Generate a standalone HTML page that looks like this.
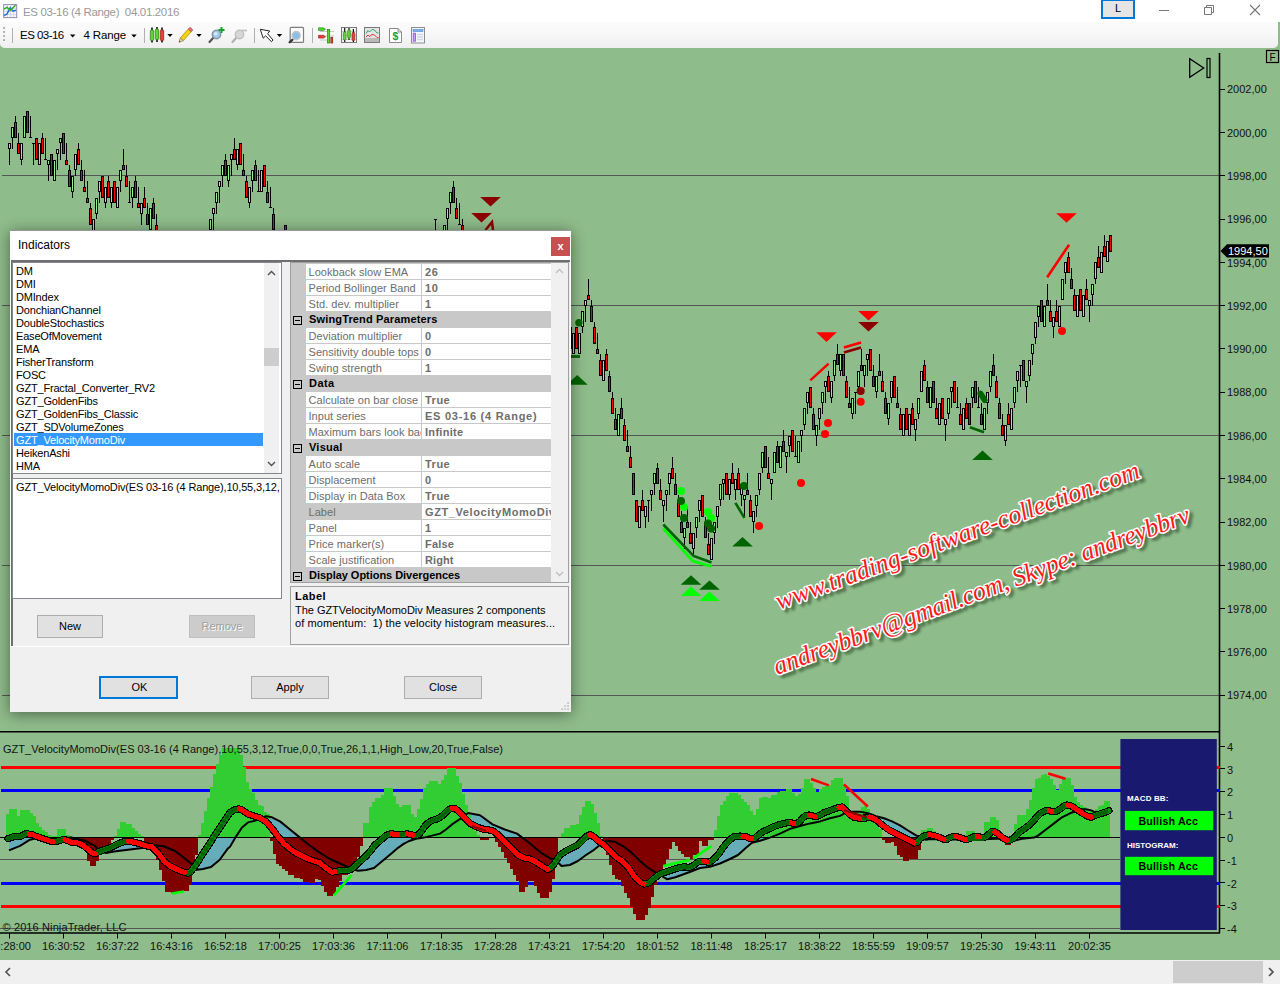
<!DOCTYPE html>
<html><head><meta charset="utf-8"><title>ES 03-16 (4 Range) 04.01.2016</title>
<style>
html,body{margin:0;padding:0}
body{width:1280px;height:984px;overflow:hidden;position:relative;background:#8FBC8B;font-family:"Liberation Sans",sans-serif;font-size:11px;color:#000}
.abs{position:absolute}
#titlebar{left:0;top:0;width:1280px;height:22px;background:#fff}
#titletext{left:23px;top:6px;font-size:11.5px;color:#999;white-space:pre;letter-spacing:-0.34px}
#toolbar{left:0;top:22px;width:1278px;height:26px;border-radius:0 0 5px 5px/0 0 4px 4px;background:linear-gradient(#fbfbfb 0%,#f8f8f8 45%,#efefef 100%)}
  .tbt{font-size:11.5px;top:29px;color:#000;white-space:pre}
svg{position:absolute;left:0;top:0}
#dlg{left:10px;top:230px;width:561px;height:482px;background:#fff;box-shadow:0 2px 14px rgba(0,0,0,.47)}
#dlgtitle{left:8px;top:8px;font-size:12px;color:#000}
#dlgclose{left:541px;top:7px;width:19px;height:19px;background:#C75050;color:#fff;font-weight:bold;font-size:11px;text-align:center;line-height:18px}
#dlgbody{left:1px;top:30px;width:558.5px;height:386px;background:#f0f0f0;border-top:2px solid #6e6e6e;border-left:2px solid #6e6e6e;box-sizing:border-box}
.lb{background:#fff;border:1px solid #828790;box-sizing:border-box;overflow:hidden}
.li{position:absolute;left:3px;height:13px;line-height:13px;white-space:pre;font-size:11px;letter-spacing:-0.18px}
.btn{position:absolute;box-sizing:border-box;background:#e1e1e1;border:1px solid #adadad;text-align:center;font-size:11px;line-height:20px;height:23px}
.pgrow{position:absolute;left:0;height:16px;width:260px}
.pgl{position:absolute;left:15px;top:0;width:115px;height:15px;background:#fff;border-bottom:1px solid #c8c8c8;color:#6d6d6d;line-height:16px;white-space:pre;overflow:hidden;text-indent:2.5px;letter-spacing:0.04px}
.pgv{position:absolute;left:131px;top:0;width:129px;height:15px;background:#fff;border-bottom:1px solid #c8c8c8;color:#6d6d6d;font-weight:bold;line-height:16px;white-space:pre;overflow:hidden;text-indent:3px;letter-spacing:-0.35px}
.pgc{position:absolute;left:18px;top:0;height:16px;line-height:15px;font-weight:bold;color:#000;white-space:pre;letter-spacing:-0.3px}
.pgx{position:absolute;left:2px;top:4px;width:7px;height:7px;border:1px solid #000}
.pgx:after{content:"";position:absolute;left:1px;top:3px;width:5px;height:1px;background:#000}
</style></head><body>
<svg width="1280" height="984" viewBox="0 0 1280 984" font-family="'Liberation Sans',sans-serif" font-size="11">
<line x1="2" y1="175.5" x2="1219" y2="175.5" stroke="#555" stroke-width="1"/>
<line x1="2" y1="305.5" x2="1219" y2="305.5" stroke="#555" stroke-width="1"/>
<line x1="2" y1="435.5" x2="1219" y2="435.5" stroke="#555" stroke-width="1"/>
<line x1="2" y1="565.5" x2="1219" y2="565.5" stroke="#555" stroke-width="1"/>
<line x1="2" y1="695.5" x2="1219" y2="695.5" stroke="#555" stroke-width="1"/>
<g shape-rendering="crispEdges"><path d="M9.5 143.0V165.0" stroke="#000" stroke-width="1"/><rect x="8.5" y="143.5" width="2" height="5.0" fill="#90EE90" stroke="#000" stroke-width="1"/><path d="M12.5 127.0V149.0" stroke="#000" stroke-width="1"/><rect x="11.5" y="127.5" width="2" height="10.0" fill="#90EE90" stroke="#000" stroke-width="1"/><path d="M15.5 116.0V138.0" stroke="#000" stroke-width="1"/><rect x="14.5" y="122.5" width="2" height="15.0" fill="#FF0000" stroke="#000" stroke-width="1"/><path d="M18.5 133.0V154.0" stroke="#000" stroke-width="1"/><rect x="17.5" y="143.5" width="2" height="10.0" fill="#FF0000" stroke="#000" stroke-width="1"/><path d="M21.5 143.0V165.0" stroke="#000" stroke-width="1"/><rect x="20.5" y="143.5" width="2" height="16.0" fill="#90EE90" stroke="#000" stroke-width="1"/><path d="M24.5 116.0V138.0" stroke="#000" stroke-width="1"/><rect x="23.5" y="116.5" width="2" height="21.0" fill="#90EE90" stroke="#000" stroke-width="1"/><path d="M27.5 111.0V133.0" stroke="#000" stroke-width="1"/><rect x="26.5" y="111.5" width="2" height="21.0" fill="#FF0000" stroke="#000" stroke-width="1"/><path d="M30.5 116.0V138.0" stroke="#000" stroke-width="1"/><path d="M29.0 137.5H32.0" stroke="#000" stroke-width="1"/><path d="M33.5 143.0V165.0" stroke="#000" stroke-width="1"/><path d="M32.0 143.5H35.0" stroke="#000" stroke-width="1"/><path d="M36.5 138.0V160.0" stroke="#000" stroke-width="1"/><rect x="35.5" y="138.5" width="2" height="21.0" fill="#FF0000" stroke="#000" stroke-width="1"/><path d="M39.5 143.0V165.0" stroke="#000" stroke-width="1"/><rect x="38.5" y="143.5" width="2" height="21.0" fill="#90EE90" stroke="#000" stroke-width="1"/><path d="M42.5 133.0V154.0" stroke="#000" stroke-width="1"/><rect x="41.5" y="138.5" width="2" height="15.0" fill="#FF0000" stroke="#000" stroke-width="1"/><path d="M45.5 138.0V160.0" stroke="#000" stroke-width="1"/><path d="M44.0 159.5H47.0" stroke="#000" stroke-width="1"/><path d="M48.5 160.0V181.0" stroke="#000" stroke-width="1"/><rect x="47.5" y="160.5" width="2" height="4.0" fill="#90EE90" stroke="#000" stroke-width="1"/><path d="M51.5 154.0V176.0" stroke="#000" stroke-width="1"/><rect x="50.5" y="154.5" width="2" height="21.0" fill="#FF0000" stroke="#000" stroke-width="1"/><path d="M54.5 160.0V181.0" stroke="#000" stroke-width="1"/><rect x="53.5" y="160.5" width="2" height="20.0" fill="#90EE90" stroke="#000" stroke-width="1"/><path d="M57.5 149.0V170.0" stroke="#000" stroke-width="1"/><rect x="56.5" y="149.5" width="2" height="4.0" fill="#90EE90" stroke="#000" stroke-width="1"/><path d="M60.5 138.0V160.0" stroke="#000" stroke-width="1"/><rect x="59.5" y="138.5" width="2" height="4.0" fill="#90EE90" stroke="#000" stroke-width="1"/><path d="M63.5 133.0V154.0" stroke="#000" stroke-width="1"/><rect x="62.5" y="133.5" width="2" height="20.0" fill="#FF0000" stroke="#000" stroke-width="1"/><path d="M66.5 143.0V165.0" stroke="#000" stroke-width="1"/><rect x="65.5" y="160.5" width="2" height="4.0" fill="#FF0000" stroke="#000" stroke-width="1"/><path d="M69.5 165.0V187.0" stroke="#000" stroke-width="1"/><rect x="68.5" y="170.5" width="2" height="16.0" fill="#FF0000" stroke="#000" stroke-width="1"/><path d="M72.5 176.0V198.0" stroke="#000" stroke-width="1"/><rect x="71.5" y="176.5" width="2" height="15.0" fill="#90EE90" stroke="#000" stroke-width="1"/><path d="M75.5 154.0V176.0" stroke="#000" stroke-width="1"/><rect x="74.5" y="154.5" width="2" height="15.0" fill="#90EE90" stroke="#000" stroke-width="1"/><path d="M78.5 143.0V165.0" stroke="#000" stroke-width="1"/><rect x="77.5" y="149.5" width="2" height="15.0" fill="#FF0000" stroke="#000" stroke-width="1"/><path d="M81.5 160.0V181.0" stroke="#000" stroke-width="1"/><rect x="80.5" y="170.5" width="2" height="10.0" fill="#FF0000" stroke="#000" stroke-width="1"/><path d="M84.5 170.0V192.0" stroke="#000" stroke-width="1"/><rect x="83.5" y="187.5" width="2" height="4.0" fill="#FF0000" stroke="#000" stroke-width="1"/><path d="M87.5 181.0V203.0" stroke="#000" stroke-width="1"/><rect x="86.5" y="198.5" width="2" height="4.0" fill="#FF0000" stroke="#000" stroke-width="1"/><path d="M90.5 203.0V225.0" stroke="#000" stroke-width="1"/><rect x="89.5" y="208.5" width="2" height="16.0" fill="#FF0000" stroke="#000" stroke-width="1"/><path d="M93.5 219.0V241.0" stroke="#000" stroke-width="1"/><rect x="92.5" y="219.5" width="2" height="15.0" fill="#90EE90" stroke="#000" stroke-width="1"/><path d="M96.5 198.0V219.0" stroke="#000" stroke-width="1"/><rect x="95.5" y="198.5" width="2" height="15.0" fill="#90EE90" stroke="#000" stroke-width="1"/><path d="M99.5 181.0V203.0" stroke="#000" stroke-width="1"/><rect x="98.5" y="181.5" width="2" height="10.0" fill="#90EE90" stroke="#000" stroke-width="1"/><path d="M102.5 176.0V198.0" stroke="#000" stroke-width="1"/><rect x="101.5" y="176.5" width="2" height="21.0" fill="#FF0000" stroke="#000" stroke-width="1"/><path d="M105.5 187.0V208.0" stroke="#000" stroke-width="1"/><rect x="104.5" y="187.5" width="2" height="15.0" fill="#90EE90" stroke="#000" stroke-width="1"/><path d="M108.5 176.0V198.0" stroke="#000" stroke-width="1"/><rect x="107.5" y="181.5" width="2" height="16.0" fill="#FF0000" stroke="#000" stroke-width="1"/><path d="M111.5 187.0V208.0" stroke="#000" stroke-width="1"/><rect x="110.5" y="187.5" width="2" height="15.0" fill="#90EE90" stroke="#000" stroke-width="1"/><path d="M114.5 181.0V203.0" stroke="#000" stroke-width="1"/><rect x="113.5" y="181.5" width="2" height="21.0" fill="#FF0000" stroke="#000" stroke-width="1"/><path d="M117.5 187.0V208.0" stroke="#000" stroke-width="1"/><rect x="116.5" y="187.5" width="2" height="20.0" fill="#90EE90" stroke="#000" stroke-width="1"/><path d="M120.5 170.0V192.0" stroke="#000" stroke-width="1"/><rect x="119.5" y="170.5" width="2" height="10.0" fill="#90EE90" stroke="#000" stroke-width="1"/><path d="M123.5 149.0V170.0" stroke="#000" stroke-width="1"/><rect x="122.5" y="165.5" width="2" height="4.0" fill="#FF0000" stroke="#000" stroke-width="1"/><path d="M126.5 165.0V187.0" stroke="#000" stroke-width="1"/><rect x="125.5" y="176.5" width="2" height="10.0" fill="#FF0000" stroke="#000" stroke-width="1"/><path d="M129.5 181.0V203.0" stroke="#000" stroke-width="1"/><path d="M128.0 202.5H131.0" stroke="#000" stroke-width="1"/><path d="M132.5 187.0V208.0" stroke="#000" stroke-width="1"/><rect x="131.5" y="187.5" width="2" height="10.0" fill="#90EE90" stroke="#000" stroke-width="1"/><path d="M135.5 176.0V198.0" stroke="#000" stroke-width="1"/><rect x="134.5" y="181.5" width="2" height="16.0" fill="#FF0000" stroke="#000" stroke-width="1"/><path d="M138.5 187.0V208.0" stroke="#000" stroke-width="1"/><rect x="137.5" y="203.5" width="2" height="4.0" fill="#FF0000" stroke="#000" stroke-width="1"/><path d="M141.5 203.0V225.0" stroke="#000" stroke-width="1"/><rect x="140.5" y="203.5" width="2" height="10.0" fill="#90EE90" stroke="#000" stroke-width="1"/><path d="M144.5 187.0V208.0" stroke="#000" stroke-width="1"/><rect x="143.5" y="198.5" width="2" height="9.0" fill="#FF0000" stroke="#000" stroke-width="1"/><path d="M147.5 203.0V225.0" stroke="#000" stroke-width="1"/><rect x="146.5" y="214.5" width="2" height="10.0" fill="#FF0000" stroke="#000" stroke-width="1"/><path d="M150.5 208.0V230.0" stroke="#000" stroke-width="1"/><rect x="149.5" y="208.5" width="2" height="21.0" fill="#90EE90" stroke="#000" stroke-width="1"/><path d="M153.5 198.0V219.0" stroke="#000" stroke-width="1"/><rect x="152.5" y="203.5" width="2" height="15.0" fill="#FF0000" stroke="#000" stroke-width="1"/><path d="M156.5 214.0V235.0" stroke="#000" stroke-width="1"/><rect x="155.5" y="225.5" width="2" height="9.0" fill="#FF0000" stroke="#000" stroke-width="1"/><path d="M210.5 219.0V241.0" stroke="#000" stroke-width="1"/><rect x="209.5" y="219.5" width="2" height="10.0" fill="#90EE90" stroke="#000" stroke-width="1"/><path d="M213.5 208.0V230.0" stroke="#000" stroke-width="1"/><rect x="212.5" y="208.5" width="2" height="5.0" fill="#90EE90" stroke="#000" stroke-width="1"/><path d="M216.5 192.0V214.0" stroke="#000" stroke-width="1"/><rect x="215.5" y="192.5" width="2" height="10.0" fill="#90EE90" stroke="#000" stroke-width="1"/><path d="M219.5 181.0V203.0" stroke="#000" stroke-width="1"/><rect x="218.5" y="181.5" width="2" height="5.0" fill="#90EE90" stroke="#000" stroke-width="1"/><path d="M222.5 165.0V187.0" stroke="#000" stroke-width="1"/><rect x="221.5" y="165.5" width="2" height="10.0" fill="#90EE90" stroke="#000" stroke-width="1"/><path d="M225.5 154.0V176.0" stroke="#000" stroke-width="1"/><rect x="224.5" y="160.5" width="2" height="15.0" fill="#FF0000" stroke="#000" stroke-width="1"/><path d="M228.5 165.0V187.0" stroke="#000" stroke-width="1"/><rect x="227.5" y="165.5" width="2" height="15.0" fill="#90EE90" stroke="#000" stroke-width="1"/><path d="M231.5 154.0V176.0" stroke="#000" stroke-width="1"/><rect x="230.5" y="154.5" width="2" height="5.0" fill="#90EE90" stroke="#000" stroke-width="1"/><path d="M234.5 138.0V160.0" stroke="#000" stroke-width="1"/><rect x="233.5" y="149.5" width="2" height="10.0" fill="#FF0000" stroke="#000" stroke-width="1"/><path d="M237.5 149.0V170.0" stroke="#000" stroke-width="1"/><rect x="236.5" y="149.5" width="2" height="15.0" fill="#90EE90" stroke="#000" stroke-width="1"/><path d="M240.5 143.0V165.0" stroke="#000" stroke-width="1"/><rect x="239.5" y="143.5" width="2" height="21.0" fill="#FF0000" stroke="#000" stroke-width="1"/><path d="M243.5 154.0V176.0" stroke="#000" stroke-width="1"/><rect x="242.5" y="170.5" width="2" height="5.0" fill="#FF0000" stroke="#000" stroke-width="1"/><path d="M246.5 176.0V198.0" stroke="#000" stroke-width="1"/><rect x="245.5" y="181.5" width="2" height="16.0" fill="#FF0000" stroke="#000" stroke-width="1"/><path d="M249.5 187.0V208.0" stroke="#000" stroke-width="1"/><rect x="248.5" y="187.5" width="2" height="15.0" fill="#90EE90" stroke="#000" stroke-width="1"/><path d="M252.5 170.0V192.0" stroke="#000" stroke-width="1"/><rect x="251.5" y="170.5" width="2" height="10.0" fill="#90EE90" stroke="#000" stroke-width="1"/><path d="M255.5 160.0V181.0" stroke="#000" stroke-width="1"/><rect x="254.5" y="165.5" width="2" height="15.0" fill="#FF0000" stroke="#000" stroke-width="1"/><path d="M258.5 170.0V192.0" stroke="#000" stroke-width="1"/><path d="M257.0 191.5H260.0" stroke="#000" stroke-width="1"/><path d="M261.5 170.0V192.0" stroke="#000" stroke-width="1"/><rect x="260.5" y="170.5" width="2" height="21.0" fill="#90EE90" stroke="#000" stroke-width="1"/><path d="M264.5 165.0V187.0" stroke="#000" stroke-width="1"/><rect x="263.5" y="165.5" width="2" height="21.0" fill="#FF0000" stroke="#000" stroke-width="1"/><path d="M267.5 181.0V203.0" stroke="#000" stroke-width="1"/><rect x="266.5" y="192.5" width="2" height="10.0" fill="#FF0000" stroke="#000" stroke-width="1"/><path d="M270.5 187.0V208.0" stroke="#000" stroke-width="1"/><path d="M269.0 207.5H272.0" stroke="#000" stroke-width="1"/><path d="M273.5 208.0V230.0" stroke="#000" stroke-width="1"/><rect x="272.5" y="214.5" width="2" height="15.0" fill="#FF0000" stroke="#000" stroke-width="1"/><path d="M285.5 225.0V246.0" stroke="#000" stroke-width="1"/><rect x="284.5" y="225.5" width="2" height="20.0" fill="#FF0000" stroke="#000" stroke-width="1"/><path d="M435.5 219.0V241.0" stroke="#000" stroke-width="1"/><path d="M434.0 219.5H437.0" stroke="#000" stroke-width="1"/><path d="M444.5 225.0V246.0" stroke="#000" stroke-width="1"/><rect x="443.5" y="225.5" width="2" height="9.0" fill="#90EE90" stroke="#000" stroke-width="1"/><path d="M447.5 208.0V230.0" stroke="#000" stroke-width="1"/><rect x="446.5" y="208.5" width="2" height="10.0" fill="#90EE90" stroke="#000" stroke-width="1"/><path d="M450.5 192.0V214.0" stroke="#000" stroke-width="1"/><rect x="449.5" y="192.5" width="2" height="10.0" fill="#90EE90" stroke="#000" stroke-width="1"/><path d="M453.5 181.0V203.0" stroke="#000" stroke-width="1"/><rect x="452.5" y="187.5" width="2" height="15.0" fill="#FF0000" stroke="#000" stroke-width="1"/><path d="M456.5 198.0V219.0" stroke="#000" stroke-width="1"/><rect x="455.5" y="208.5" width="2" height="10.0" fill="#FF0000" stroke="#000" stroke-width="1"/><path d="M459.5 203.0V225.0" stroke="#000" stroke-width="1"/><path d="M458.0 224.5H461.0" stroke="#000" stroke-width="1"/><path d="M462.5 219.0V241.0" stroke="#000" stroke-width="1"/><rect x="461.5" y="225.5" width="2" height="15.0" fill="#FF0000" stroke="#000" stroke-width="1"/><path d="M570.5 327.0V349.0" stroke="#000" stroke-width="1"/><rect x="569.5" y="327.5" width="2" height="21.0" fill="#FF0000" stroke="#000" stroke-width="1"/><path d="M573.5 333.0V354.0" stroke="#000" stroke-width="1"/><rect x="572.5" y="333.5" width="2" height="20.0" fill="#90EE90" stroke="#000" stroke-width="1"/><path d="M576.5 327.0V349.0" stroke="#000" stroke-width="1"/><rect x="575.5" y="327.5" width="2" height="21.0" fill="#FF0000" stroke="#000" stroke-width="1"/><path d="M579.5 333.0V354.0" stroke="#000" stroke-width="1"/><rect x="578.5" y="333.5" width="2" height="20.0" fill="#90EE90" stroke="#000" stroke-width="1"/><path d="M582.5 311.0V333.0" stroke="#000" stroke-width="1"/><rect x="581.5" y="311.5" width="2" height="15.0" fill="#90EE90" stroke="#000" stroke-width="1"/><path d="M585.5 300.0V322.0" stroke="#000" stroke-width="1"/><rect x="584.5" y="300.5" width="2" height="5.0" fill="#90EE90" stroke="#000" stroke-width="1"/><path d="M588.5 279.0V300.0" stroke="#000" stroke-width="1"/><rect x="587.5" y="295.5" width="2" height="4.0" fill="#FF0000" stroke="#000" stroke-width="1"/><path d="M591.5 300.0V322.0" stroke="#000" stroke-width="1"/><rect x="590.5" y="306.5" width="2" height="15.0" fill="#FF0000" stroke="#000" stroke-width="1"/><path d="M594.5 322.0V344.0" stroke="#000" stroke-width="1"/><rect x="593.5" y="327.5" width="2" height="16.0" fill="#FF0000" stroke="#000" stroke-width="1"/><path d="M597.5 333.0V354.0" stroke="#000" stroke-width="1"/><rect x="596.5" y="349.5" width="2" height="4.0" fill="#FF0000" stroke="#000" stroke-width="1"/><path d="M600.5 354.0V376.0" stroke="#000" stroke-width="1"/><rect x="599.5" y="360.5" width="2" height="15.0" fill="#FF0000" stroke="#000" stroke-width="1"/><path d="M603.5 360.0V381.0" stroke="#000" stroke-width="1"/><rect x="602.5" y="360.5" width="2" height="20.0" fill="#90EE90" stroke="#000" stroke-width="1"/><path d="M606.5 349.0V371.0" stroke="#000" stroke-width="1"/><rect x="605.5" y="354.5" width="2" height="16.0" fill="#FF0000" stroke="#000" stroke-width="1"/><path d="M609.5 371.0V392.0" stroke="#000" stroke-width="1"/><rect x="608.5" y="376.5" width="2" height="15.0" fill="#FF0000" stroke="#000" stroke-width="1"/><path d="M612.5 392.0V414.0" stroke="#000" stroke-width="1"/><rect x="611.5" y="398.5" width="2" height="15.0" fill="#FF0000" stroke="#000" stroke-width="1"/><path d="M615.5 408.0V430.0" stroke="#000" stroke-width="1"/><rect x="614.5" y="419.5" width="2" height="10.0" fill="#FF0000" stroke="#000" stroke-width="1"/><path d="M618.5 414.0V436.0" stroke="#000" stroke-width="1"/><rect x="617.5" y="414.5" width="2" height="21.0" fill="#90EE90" stroke="#000" stroke-width="1"/><path d="M621.5 398.0V419.0" stroke="#000" stroke-width="1"/><rect x="620.5" y="408.5" width="2" height="10.0" fill="#FF0000" stroke="#000" stroke-width="1"/><path d="M624.5 419.0V441.0" stroke="#000" stroke-width="1"/><rect x="623.5" y="425.5" width="2" height="15.0" fill="#FF0000" stroke="#000" stroke-width="1"/><path d="M627.5 430.0V452.0" stroke="#000" stroke-width="1"/><rect x="626.5" y="446.5" width="2" height="5.0" fill="#FF0000" stroke="#000" stroke-width="1"/><path d="M630.5 446.0V468.0" stroke="#000" stroke-width="1"/><rect x="629.5" y="457.5" width="2" height="10.0" fill="#FF0000" stroke="#000" stroke-width="1"/><path d="M633.5 473.0V495.0" stroke="#000" stroke-width="1"/><rect x="632.5" y="473.5" width="2" height="21.0" fill="#FF0000" stroke="#000" stroke-width="1"/><path d="M636.5 500.0V522.0" stroke="#000" stroke-width="1"/><rect x="635.5" y="500.5" width="2" height="21.0" fill="#FF0000" stroke="#000" stroke-width="1"/><path d="M639.5 506.0V528.0" stroke="#000" stroke-width="1"/><rect x="638.5" y="506.5" width="2" height="21.0" fill="#90EE90" stroke="#000" stroke-width="1"/><path d="M642.5 490.0V511.0" stroke="#000" stroke-width="1"/><rect x="641.5" y="500.5" width="2" height="10.0" fill="#FF0000" stroke="#000" stroke-width="1"/><path d="M645.5 506.0V528.0" stroke="#000" stroke-width="1"/><rect x="644.5" y="506.5" width="2" height="10.0" fill="#90EE90" stroke="#000" stroke-width="1"/><path d="M648.5 500.0V522.0" stroke="#000" stroke-width="1"/><path d="M647.0 500.5H650.0" stroke="#000" stroke-width="1"/><path d="M651.5 490.0V511.0" stroke="#000" stroke-width="1"/><rect x="650.5" y="490.5" width="2" height="4.0" fill="#90EE90" stroke="#000" stroke-width="1"/><path d="M654.5 473.0V495.0" stroke="#000" stroke-width="1"/><rect x="653.5" y="473.5" width="2" height="10.0" fill="#90EE90" stroke="#000" stroke-width="1"/><path d="M657.5 463.0V484.0" stroke="#000" stroke-width="1"/><rect x="656.5" y="468.5" width="2" height="15.0" fill="#FF0000" stroke="#000" stroke-width="1"/><path d="M660.5 479.0V500.0" stroke="#000" stroke-width="1"/><rect x="659.5" y="490.5" width="2" height="9.0" fill="#FF0000" stroke="#000" stroke-width="1"/><path d="M663.5 500.0V522.0" stroke="#000" stroke-width="1"/><rect x="662.5" y="500.5" width="2" height="5.0" fill="#90EE90" stroke="#000" stroke-width="1"/><path d="M666.5 490.0V511.0" stroke="#000" stroke-width="1"/><rect x="665.5" y="490.5" width="2" height="4.0" fill="#90EE90" stroke="#000" stroke-width="1"/><path d="M669.5 473.0V495.0" stroke="#000" stroke-width="1"/><rect x="668.5" y="473.5" width="2" height="10.0" fill="#90EE90" stroke="#000" stroke-width="1"/><path d="M672.5 457.0V479.0" stroke="#000" stroke-width="1"/><rect x="671.5" y="468.5" width="2" height="10.0" fill="#FF0000" stroke="#000" stroke-width="1"/><path d="M675.5 473.0V495.0" stroke="#000" stroke-width="1"/><rect x="674.5" y="484.5" width="2" height="10.0" fill="#FF0000" stroke="#000" stroke-width="1"/><path d="M678.5 495.0V517.0" stroke="#000" stroke-width="1"/><rect x="677.5" y="500.5" width="2" height="16.0" fill="#FF0000" stroke="#000" stroke-width="1"/><path d="M681.5 511.0V533.0" stroke="#000" stroke-width="1"/><rect x="680.5" y="522.5" width="2" height="10.0" fill="#FF0000" stroke="#000" stroke-width="1"/><path d="M684.5 528.0V549.0" stroke="#000" stroke-width="1"/><rect x="683.5" y="528.5" width="2" height="9.0" fill="#90EE90" stroke="#000" stroke-width="1"/><path d="M687.5 506.0V528.0" stroke="#000" stroke-width="1"/><rect x="686.5" y="522.5" width="2" height="5.0" fill="#FF0000" stroke="#000" stroke-width="1"/><path d="M690.5 522.0V544.0" stroke="#000" stroke-width="1"/><rect x="689.5" y="533.5" width="2" height="10.0" fill="#FF0000" stroke="#000" stroke-width="1"/><path d="M693.5 533.0V555.0" stroke="#000" stroke-width="1"/><rect x="692.5" y="533.5" width="2" height="15.0" fill="#90EE90" stroke="#000" stroke-width="1"/><path d="M696.5 517.0V538.0" stroke="#000" stroke-width="1"/><rect x="695.5" y="517.5" width="2" height="10.0" fill="#90EE90" stroke="#000" stroke-width="1"/><path d="M699.5 500.0V522.0" stroke="#000" stroke-width="1"/><rect x="698.5" y="500.5" width="2" height="10.0" fill="#90EE90" stroke="#000" stroke-width="1"/><path d="M702.5 495.0V517.0" stroke="#000" stroke-width="1"/><rect x="701.5" y="495.5" width="2" height="21.0" fill="#FF0000" stroke="#000" stroke-width="1"/><path d="M705.5 517.0V538.0" stroke="#000" stroke-width="1"/><rect x="704.5" y="522.5" width="2" height="15.0" fill="#FF0000" stroke="#000" stroke-width="1"/><path d="M708.5 533.0V555.0" stroke="#000" stroke-width="1"/><rect x="707.5" y="544.5" width="2" height="10.0" fill="#FF0000" stroke="#000" stroke-width="1"/><path d="M711.5 538.0V560.0" stroke="#000" stroke-width="1"/><rect x="710.5" y="538.5" width="2" height="21.0" fill="#90EE90" stroke="#000" stroke-width="1"/><path d="M714.5 522.0V544.0" stroke="#000" stroke-width="1"/><rect x="713.5" y="522.5" width="2" height="10.0" fill="#90EE90" stroke="#000" stroke-width="1"/><path d="M717.5 506.0V528.0" stroke="#000" stroke-width="1"/><rect x="716.5" y="506.5" width="2" height="10.0" fill="#90EE90" stroke="#000" stroke-width="1"/><path d="M720.5 484.0V506.0" stroke="#000" stroke-width="1"/><rect x="719.5" y="484.5" width="2" height="15.0" fill="#90EE90" stroke="#000" stroke-width="1"/><path d="M723.5 479.0V500.0" stroke="#000" stroke-width="1"/><rect x="722.5" y="479.5" width="2" height="4.0" fill="#90EE90" stroke="#000" stroke-width="1"/><path d="M726.5 473.0V495.0" stroke="#000" stroke-width="1"/><rect x="725.5" y="473.5" width="2" height="21.0" fill="#FF0000" stroke="#000" stroke-width="1"/><path d="M729.5 479.0V500.0" stroke="#000" stroke-width="1"/><rect x="728.5" y="479.5" width="2" height="15.0" fill="#90EE90" stroke="#000" stroke-width="1"/><path d="M732.5 463.0V484.0" stroke="#000" stroke-width="1"/><rect x="731.5" y="473.5" width="2" height="10.0" fill="#FF0000" stroke="#000" stroke-width="1"/><path d="M735.5 479.0V500.0" stroke="#000" stroke-width="1"/><rect x="734.5" y="479.5" width="2" height="10.0" fill="#90EE90" stroke="#000" stroke-width="1"/><path d="M738.5 468.0V490.0" stroke="#000" stroke-width="1"/><rect x="737.5" y="473.5" width="2" height="16.0" fill="#FF0000" stroke="#000" stroke-width="1"/><path d="M741.5 484.0V506.0" stroke="#000" stroke-width="1"/><rect x="740.5" y="484.5" width="2" height="10.0" fill="#90EE90" stroke="#000" stroke-width="1"/><path d="M744.5 495.0V517.0" stroke="#000" stroke-width="1"/><rect x="743.5" y="495.5" width="2" height="4.0" fill="#90EE90" stroke="#000" stroke-width="1"/><path d="M747.5 473.0V495.0" stroke="#000" stroke-width="1"/><rect x="746.5" y="490.5" width="2" height="4.0" fill="#FF0000" stroke="#000" stroke-width="1"/><path d="M750.5 495.0V517.0" stroke="#000" stroke-width="1"/><rect x="749.5" y="500.5" width="2" height="16.0" fill="#FF0000" stroke="#000" stroke-width="1"/><path d="M753.5 511.0V533.0" stroke="#000" stroke-width="1"/><rect x="752.5" y="511.5" width="2" height="10.0" fill="#90EE90" stroke="#000" stroke-width="1"/><path d="M756.5 495.0V517.0" stroke="#000" stroke-width="1"/><rect x="755.5" y="495.5" width="2" height="10.0" fill="#90EE90" stroke="#000" stroke-width="1"/><path d="M759.5 473.0V495.0" stroke="#000" stroke-width="1"/><rect x="758.5" y="473.5" width="2" height="16.0" fill="#90EE90" stroke="#000" stroke-width="1"/><path d="M762.5 452.0V473.0" stroke="#000" stroke-width="1"/><rect x="761.5" y="452.5" width="2" height="15.0" fill="#90EE90" stroke="#000" stroke-width="1"/><path d="M765.5 446.0V468.0" stroke="#000" stroke-width="1"/><rect x="764.5" y="446.5" width="2" height="21.0" fill="#FF0000" stroke="#000" stroke-width="1"/><path d="M768.5 457.0V479.0" stroke="#000" stroke-width="1"/><rect x="767.5" y="473.5" width="2" height="5.0" fill="#FF0000" stroke="#000" stroke-width="1"/><path d="M771.5 479.0V500.0" stroke="#000" stroke-width="1"/><rect x="770.5" y="479.5" width="2" height="4.0" fill="#90EE90" stroke="#000" stroke-width="1"/><path d="M774.5 452.0V473.0" stroke="#000" stroke-width="1"/><rect x="773.5" y="452.5" width="2" height="20.0" fill="#90EE90" stroke="#000" stroke-width="1"/><path d="M777.5 441.0V463.0" stroke="#000" stroke-width="1"/><rect x="776.5" y="446.5" width="2" height="16.0" fill="#FF0000" stroke="#000" stroke-width="1"/><path d="M780.5 446.0V468.0" stroke="#000" stroke-width="1"/><rect x="779.5" y="446.5" width="2" height="21.0" fill="#90EE90" stroke="#000" stroke-width="1"/><path d="M783.5 430.0V452.0" stroke="#000" stroke-width="1"/><rect x="782.5" y="441.5" width="2" height="10.0" fill="#FF0000" stroke="#000" stroke-width="1"/><path d="M786.5 452.0V473.0" stroke="#000" stroke-width="1"/><rect x="785.5" y="452.5" width="2" height="4.0" fill="#90EE90" stroke="#000" stroke-width="1"/><path d="M789.5 436.0V457.0" stroke="#000" stroke-width="1"/><rect x="788.5" y="436.5" width="2" height="9.0" fill="#90EE90" stroke="#000" stroke-width="1"/><path d="M792.5 430.0V452.0" stroke="#000" stroke-width="1"/><rect x="791.5" y="430.5" width="2" height="21.0" fill="#FF0000" stroke="#000" stroke-width="1"/><path d="M795.5 436.0V457.0" stroke="#000" stroke-width="1"/><path d="M794.0 456.5H797.0" stroke="#000" stroke-width="1"/><path d="M798.5 441.0V463.0" stroke="#000" stroke-width="1"/><rect x="797.5" y="441.5" width="2" height="21.0" fill="#90EE90" stroke="#000" stroke-width="1"/><path d="M801.5 430.0V452.0" stroke="#000" stroke-width="1"/><rect x="800.5" y="430.5" width="2" height="5.0" fill="#90EE90" stroke="#000" stroke-width="1"/><path d="M804.5 408.0V430.0" stroke="#000" stroke-width="1"/><rect x="803.5" y="408.5" width="2" height="16.0" fill="#90EE90" stroke="#000" stroke-width="1"/><path d="M807.5 392.0V414.0" stroke="#000" stroke-width="1"/><rect x="806.5" y="392.5" width="2" height="10.0" fill="#90EE90" stroke="#000" stroke-width="1"/><path d="M810.5 387.0V408.0" stroke="#000" stroke-width="1"/><rect x="809.5" y="387.5" width="2" height="20.0" fill="#FF0000" stroke="#000" stroke-width="1"/><path d="M813.5 408.0V430.0" stroke="#000" stroke-width="1"/><rect x="812.5" y="414.5" width="2" height="15.0" fill="#FF0000" stroke="#000" stroke-width="1"/><path d="M816.5 425.0V446.0" stroke="#000" stroke-width="1"/><rect x="815.5" y="425.5" width="2" height="10.0" fill="#90EE90" stroke="#000" stroke-width="1"/><path d="M819.5 408.0V430.0" stroke="#000" stroke-width="1"/><rect x="818.5" y="408.5" width="2" height="10.0" fill="#90EE90" stroke="#000" stroke-width="1"/><path d="M822.5 392.0V414.0" stroke="#000" stroke-width="1"/><rect x="821.5" y="392.5" width="2" height="10.0" fill="#90EE90" stroke="#000" stroke-width="1"/><path d="M825.5 381.0V403.0" stroke="#000" stroke-width="1"/><rect x="824.5" y="381.5" width="2" height="5.0" fill="#90EE90" stroke="#000" stroke-width="1"/><path d="M828.5 371.0V392.0" stroke="#000" stroke-width="1"/><rect x="827.5" y="376.5" width="2" height="15.0" fill="#FF0000" stroke="#000" stroke-width="1"/><path d="M831.5 381.0V403.0" stroke="#000" stroke-width="1"/><rect x="830.5" y="381.5" width="2" height="16.0" fill="#90EE90" stroke="#000" stroke-width="1"/><path d="M834.5 360.0V381.0" stroke="#000" stroke-width="1"/><rect x="833.5" y="360.5" width="2" height="15.0" fill="#90EE90" stroke="#000" stroke-width="1"/><path d="M837.5 344.0V365.0" stroke="#000" stroke-width="1"/><rect x="836.5" y="354.5" width="2" height="10.0" fill="#FF0000" stroke="#000" stroke-width="1"/><path d="M840.5 354.0V376.0" stroke="#000" stroke-width="1"/><rect x="839.5" y="354.5" width="2" height="16.0" fill="#90EE90" stroke="#000" stroke-width="1"/><path d="M843.5 354.0V376.0" stroke="#000" stroke-width="1"/><rect x="842.5" y="354.5" width="2" height="21.0" fill="#FF0000" stroke="#000" stroke-width="1"/><path d="M846.5 376.0V398.0" stroke="#000" stroke-width="1"/><rect x="845.5" y="381.5" width="2" height="16.0" fill="#FF0000" stroke="#000" stroke-width="1"/><path d="M849.5 387.0V408.0" stroke="#000" stroke-width="1"/><rect x="848.5" y="403.5" width="2" height="4.0" fill="#FF0000" stroke="#000" stroke-width="1"/><path d="M852.5 398.0V419.0" stroke="#000" stroke-width="1"/><rect x="851.5" y="398.5" width="2" height="15.0" fill="#90EE90" stroke="#000" stroke-width="1"/><path d="M855.5 392.0V414.0" stroke="#000" stroke-width="1"/><path d="M854.0 392.5H857.0" stroke="#000" stroke-width="1"/><path d="M858.5 371.0V392.0" stroke="#000" stroke-width="1"/><rect x="857.5" y="371.5" width="2" height="15.0" fill="#90EE90" stroke="#000" stroke-width="1"/><path d="M861.5 349.0V371.0" stroke="#000" stroke-width="1"/><rect x="860.5" y="365.5" width="2" height="5.0" fill="#FF0000" stroke="#000" stroke-width="1"/><path d="M864.5 365.0V387.0" stroke="#000" stroke-width="1"/><rect x="863.5" y="365.5" width="2" height="10.0" fill="#90EE90" stroke="#000" stroke-width="1"/><path d="M867.5 354.0V376.0" stroke="#000" stroke-width="1"/><rect x="866.5" y="354.5" width="2" height="5.0" fill="#90EE90" stroke="#000" stroke-width="1"/><path d="M870.5 349.0V371.0" stroke="#000" stroke-width="1"/><rect x="869.5" y="349.5" width="2" height="21.0" fill="#FF0000" stroke="#000" stroke-width="1"/><path d="M873.5 365.0V387.0" stroke="#000" stroke-width="1"/><rect x="872.5" y="376.5" width="2" height="10.0" fill="#FF0000" stroke="#000" stroke-width="1"/><path d="M876.5 376.0V398.0" stroke="#000" stroke-width="1"/><rect x="875.5" y="376.5" width="2" height="15.0" fill="#90EE90" stroke="#000" stroke-width="1"/><path d="M879.5 354.0V376.0" stroke="#000" stroke-width="1"/><rect x="878.5" y="371.5" width="2" height="4.0" fill="#FF0000" stroke="#000" stroke-width="1"/><path d="M882.5 371.0V392.0" stroke="#000" stroke-width="1"/><rect x="881.5" y="381.5" width="2" height="10.0" fill="#FF0000" stroke="#000" stroke-width="1"/><path d="M885.5 392.0V414.0" stroke="#000" stroke-width="1"/><rect x="884.5" y="398.5" width="2" height="15.0" fill="#FF0000" stroke="#000" stroke-width="1"/><path d="M888.5 403.0V425.0" stroke="#000" stroke-width="1"/><rect x="887.5" y="403.5" width="2" height="15.0" fill="#90EE90" stroke="#000" stroke-width="1"/><path d="M891.5 381.0V403.0" stroke="#000" stroke-width="1"/><rect x="890.5" y="381.5" width="2" height="16.0" fill="#90EE90" stroke="#000" stroke-width="1"/><path d="M894.5 376.0V398.0" stroke="#000" stroke-width="1"/><rect x="893.5" y="376.5" width="2" height="21.0" fill="#FF0000" stroke="#000" stroke-width="1"/><path d="M897.5 387.0V408.0" stroke="#000" stroke-width="1"/><rect x="896.5" y="403.5" width="2" height="4.0" fill="#FF0000" stroke="#000" stroke-width="1"/><path d="M900.5 408.0V430.0" stroke="#000" stroke-width="1"/><rect x="899.5" y="414.5" width="2" height="15.0" fill="#FF0000" stroke="#000" stroke-width="1"/><path d="M903.5 414.0V436.0" stroke="#000" stroke-width="1"/><rect x="902.5" y="414.5" width="2" height="21.0" fill="#90EE90" stroke="#000" stroke-width="1"/><path d="M906.5 408.0V430.0" stroke="#000" stroke-width="1"/><rect x="905.5" y="408.5" width="2" height="21.0" fill="#FF0000" stroke="#000" stroke-width="1"/><path d="M909.5 414.0V436.0" stroke="#000" stroke-width="1"/><rect x="908.5" y="414.5" width="2" height="21.0" fill="#90EE90" stroke="#000" stroke-width="1"/><path d="M912.5 403.0V425.0" stroke="#000" stroke-width="1"/><rect x="911.5" y="408.5" width="2" height="16.0" fill="#FF0000" stroke="#000" stroke-width="1"/><path d="M915.5 419.0V441.0" stroke="#000" stroke-width="1"/><rect x="914.5" y="419.5" width="2" height="10.0" fill="#90EE90" stroke="#000" stroke-width="1"/><path d="M918.5 398.0V419.0" stroke="#000" stroke-width="1"/><rect x="917.5" y="398.5" width="2" height="15.0" fill="#90EE90" stroke="#000" stroke-width="1"/><path d="M921.5 371.0V392.0" stroke="#000" stroke-width="1"/><rect x="920.5" y="371.5" width="2" height="20.0" fill="#90EE90" stroke="#000" stroke-width="1"/><path d="M924.5 360.0V381.0" stroke="#000" stroke-width="1"/><rect x="923.5" y="365.5" width="2" height="15.0" fill="#FF0000" stroke="#000" stroke-width="1"/><path d="M927.5 381.0V403.0" stroke="#000" stroke-width="1"/><rect x="926.5" y="387.5" width="2" height="15.0" fill="#FF0000" stroke="#000" stroke-width="1"/><path d="M930.5 387.0V408.0" stroke="#000" stroke-width="1"/><rect x="929.5" y="387.5" width="2" height="20.0" fill="#90EE90" stroke="#000" stroke-width="1"/><path d="M933.5 381.0V403.0" stroke="#000" stroke-width="1"/><rect x="932.5" y="381.5" width="2" height="21.0" fill="#FF0000" stroke="#000" stroke-width="1"/><path d="M936.5 398.0V419.0" stroke="#000" stroke-width="1"/><rect x="935.5" y="408.5" width="2" height="10.0" fill="#FF0000" stroke="#000" stroke-width="1"/><path d="M939.5 403.0V425.0" stroke="#000" stroke-width="1"/><rect x="938.5" y="403.5" width="2" height="21.0" fill="#90EE90" stroke="#000" stroke-width="1"/><path d="M942.5 398.0V419.0" stroke="#000" stroke-width="1"/><rect x="941.5" y="398.5" width="2" height="20.0" fill="#FF0000" stroke="#000" stroke-width="1"/><path d="M945.5 419.0V441.0" stroke="#000" stroke-width="1"/><rect x="944.5" y="419.5" width="2" height="5.0" fill="#90EE90" stroke="#000" stroke-width="1"/><path d="M948.5 398.0V419.0" stroke="#000" stroke-width="1"/><rect x="947.5" y="398.5" width="2" height="15.0" fill="#90EE90" stroke="#000" stroke-width="1"/><path d="M951.5 387.0V408.0" stroke="#000" stroke-width="1"/><rect x="950.5" y="387.5" width="2" height="4.0" fill="#90EE90" stroke="#000" stroke-width="1"/><path d="M954.5 381.0V403.0" stroke="#000" stroke-width="1"/><rect x="953.5" y="381.5" width="2" height="21.0" fill="#FF0000" stroke="#000" stroke-width="1"/><path d="M957.5 387.0V408.0" stroke="#000" stroke-width="1"/><path d="M956.0 407.5H959.0" stroke="#000" stroke-width="1"/><path d="M960.5 403.0V425.0" stroke="#000" stroke-width="1"/><rect x="959.5" y="414.5" width="2" height="10.0" fill="#FF0000" stroke="#000" stroke-width="1"/><path d="M963.5 408.0V430.0" stroke="#000" stroke-width="1"/><rect x="962.5" y="408.5" width="2" height="21.0" fill="#90EE90" stroke="#000" stroke-width="1"/><path d="M966.5 398.0V419.0" stroke="#000" stroke-width="1"/><rect x="965.5" y="403.5" width="2" height="15.0" fill="#FF0000" stroke="#000" stroke-width="1"/><path d="M969.5 403.0V425.0" stroke="#000" stroke-width="1"/><rect x="968.5" y="403.5" width="2" height="21.0" fill="#FF0000" stroke="#000" stroke-width="1"/><path d="M972.5 387.0V408.0" stroke="#000" stroke-width="1"/><rect x="971.5" y="387.5" width="2" height="10.0" fill="#90EE90" stroke="#000" stroke-width="1"/><path d="M975.5 381.0V403.0" stroke="#000" stroke-width="1"/><rect x="974.5" y="381.5" width="2" height="21.0" fill="#FF0000" stroke="#000" stroke-width="1"/><path d="M978.5 387.0V408.0" stroke="#000" stroke-width="1"/><path d="M977.0 407.5H980.0" stroke="#000" stroke-width="1"/><path d="M981.5 403.0V425.0" stroke="#000" stroke-width="1"/><rect x="980.5" y="414.5" width="2" height="10.0" fill="#FF0000" stroke="#000" stroke-width="1"/><path d="M984.5 408.0V430.0" stroke="#000" stroke-width="1"/><rect x="983.5" y="408.5" width="2" height="21.0" fill="#90EE90" stroke="#000" stroke-width="1"/><path d="M987.5 392.0V414.0" stroke="#000" stroke-width="1"/><rect x="986.5" y="392.5" width="2" height="10.0" fill="#90EE90" stroke="#000" stroke-width="1"/><path d="M990.5 371.0V392.0" stroke="#000" stroke-width="1"/><rect x="989.5" y="371.5" width="2" height="15.0" fill="#90EE90" stroke="#000" stroke-width="1"/><path d="M993.5 354.0V376.0" stroke="#000" stroke-width="1"/><rect x="992.5" y="365.5" width="2" height="10.0" fill="#FF0000" stroke="#000" stroke-width="1"/><path d="M996.5 376.0V398.0" stroke="#000" stroke-width="1"/><rect x="995.5" y="381.5" width="2" height="16.0" fill="#FF0000" stroke="#000" stroke-width="1"/><path d="M999.5 398.0V419.0" stroke="#000" stroke-width="1"/><rect x="998.5" y="403.5" width="2" height="15.0" fill="#FF0000" stroke="#000" stroke-width="1"/><path d="M1002.5 414.0V436.0" stroke="#000" stroke-width="1"/><rect x="1001.5" y="425.5" width="2" height="10.0" fill="#FF0000" stroke="#000" stroke-width="1"/><path d="M1005.5 425.0V446.0" stroke="#000" stroke-width="1"/><rect x="1004.5" y="425.5" width="2" height="15.0" fill="#90EE90" stroke="#000" stroke-width="1"/><path d="M1008.5 403.0V425.0" stroke="#000" stroke-width="1"/><rect x="1007.5" y="414.5" width="2" height="10.0" fill="#FF0000" stroke="#000" stroke-width="1"/><path d="M1011.5 408.0V430.0" stroke="#000" stroke-width="1"/><rect x="1010.5" y="408.5" width="2" height="21.0" fill="#90EE90" stroke="#000" stroke-width="1"/><path d="M1014.5 387.0V408.0" stroke="#000" stroke-width="1"/><rect x="1013.5" y="387.5" width="2" height="15.0" fill="#90EE90" stroke="#000" stroke-width="1"/><path d="M1017.5 371.0V392.0" stroke="#000" stroke-width="1"/><rect x="1016.5" y="371.5" width="2" height="9.0" fill="#90EE90" stroke="#000" stroke-width="1"/><path d="M1020.5 365.0V387.0" stroke="#000" stroke-width="1"/><path d="M1019.0 365.5H1022.0" stroke="#000" stroke-width="1"/><path d="M1023.5 360.0V381.0" stroke="#000" stroke-width="1"/><rect x="1022.5" y="360.5" width="2" height="20.0" fill="#FF0000" stroke="#000" stroke-width="1"/><path d="M1026.5 381.0V403.0" stroke="#000" stroke-width="1"/><rect x="1025.5" y="381.5" width="2" height="5.0" fill="#90EE90" stroke="#000" stroke-width="1"/><path d="M1029.5 360.0V381.0" stroke="#000" stroke-width="1"/><rect x="1028.5" y="360.5" width="2" height="15.0" fill="#90EE90" stroke="#000" stroke-width="1"/><path d="M1032.5 344.0V365.0" stroke="#000" stroke-width="1"/><rect x="1031.5" y="344.5" width="2" height="9.0" fill="#90EE90" stroke="#000" stroke-width="1"/><path d="M1035.5 322.0V344.0" stroke="#000" stroke-width="1"/><rect x="1034.5" y="322.5" width="2" height="15.0" fill="#90EE90" stroke="#000" stroke-width="1"/><path d="M1038.5 306.0V327.0" stroke="#000" stroke-width="1"/><rect x="1037.5" y="306.5" width="2" height="10.0" fill="#90EE90" stroke="#000" stroke-width="1"/><path d="M1041.5 300.0V322.0" stroke="#000" stroke-width="1"/><rect x="1040.5" y="300.5" width="2" height="21.0" fill="#FF0000" stroke="#000" stroke-width="1"/><path d="M1044.5 306.0V327.0" stroke="#000" stroke-width="1"/><rect x="1043.5" y="306.5" width="2" height="20.0" fill="#90EE90" stroke="#000" stroke-width="1"/><path d="M1047.5 284.0V306.0" stroke="#000" stroke-width="1"/><rect x="1046.5" y="300.5" width="2" height="5.0" fill="#FF0000" stroke="#000" stroke-width="1"/><path d="M1050.5 300.0V322.0" stroke="#000" stroke-width="1"/><rect x="1049.5" y="311.5" width="2" height="10.0" fill="#FF0000" stroke="#000" stroke-width="1"/><path d="M1053.5 317.0V338.0" stroke="#000" stroke-width="1"/><rect x="1052.5" y="317.5" width="2" height="9.0" fill="#90EE90" stroke="#000" stroke-width="1"/><path d="M1056.5 300.0V322.0" stroke="#000" stroke-width="1"/><rect x="1055.5" y="311.5" width="2" height="10.0" fill="#FF0000" stroke="#000" stroke-width="1"/><path d="M1059.5 306.0V327.0" stroke="#000" stroke-width="1"/><rect x="1058.5" y="306.5" width="2" height="20.0" fill="#90EE90" stroke="#000" stroke-width="1"/><path d="M1062.5 279.0V300.0" stroke="#000" stroke-width="1"/><rect x="1061.5" y="279.5" width="2" height="20.0" fill="#90EE90" stroke="#000" stroke-width="1"/><path d="M1065.5 262.0V284.0" stroke="#000" stroke-width="1"/><rect x="1064.5" y="262.5" width="2" height="10.0" fill="#90EE90" stroke="#000" stroke-width="1"/><path d="M1068.5 252.0V273.0" stroke="#000" stroke-width="1"/><rect x="1067.5" y="257.5" width="2" height="15.0" fill="#FF0000" stroke="#000" stroke-width="1"/><path d="M1071.5 268.0V289.0" stroke="#000" stroke-width="1"/><rect x="1070.5" y="279.5" width="2" height="9.0" fill="#FF0000" stroke="#000" stroke-width="1"/><path d="M1074.5 289.0V311.0" stroke="#000" stroke-width="1"/><rect x="1073.5" y="295.5" width="2" height="15.0" fill="#FF0000" stroke="#000" stroke-width="1"/><path d="M1077.5 295.0V317.0" stroke="#000" stroke-width="1"/><rect x="1076.5" y="295.5" width="2" height="21.0" fill="#90EE90" stroke="#000" stroke-width="1"/><path d="M1080.5 289.0V311.0" stroke="#000" stroke-width="1"/><rect x="1079.5" y="289.5" width="2" height="21.0" fill="#FF0000" stroke="#000" stroke-width="1"/><path d="M1083.5 295.0V317.0" stroke="#000" stroke-width="1"/><rect x="1082.5" y="295.5" width="2" height="21.0" fill="#90EE90" stroke="#000" stroke-width="1"/><path d="M1086.5 279.0V300.0" stroke="#000" stroke-width="1"/><rect x="1085.5" y="289.5" width="2" height="10.0" fill="#FF0000" stroke="#000" stroke-width="1"/><path d="M1089.5 300.0V322.0" stroke="#000" stroke-width="1"/><rect x="1088.5" y="300.5" width="2" height="5.0" fill="#90EE90" stroke="#000" stroke-width="1"/><path d="M1092.5 284.0V306.0" stroke="#000" stroke-width="1"/><rect x="1091.5" y="284.5" width="2" height="10.0" fill="#90EE90" stroke="#000" stroke-width="1"/><path d="M1095.5 262.0V284.0" stroke="#000" stroke-width="1"/><rect x="1094.5" y="262.5" width="2" height="16.0" fill="#90EE90" stroke="#000" stroke-width="1"/><path d="M1098.5 246.0V268.0" stroke="#000" stroke-width="1"/><rect x="1097.5" y="257.5" width="2" height="10.0" fill="#FF0000" stroke="#000" stroke-width="1"/><path d="M1101.5 252.0V273.0" stroke="#000" stroke-width="1"/><rect x="1100.5" y="252.5" width="2" height="20.0" fill="#90EE90" stroke="#000" stroke-width="1"/><path d="M1104.5 235.0V257.0" stroke="#000" stroke-width="1"/><rect x="1103.5" y="246.5" width="2" height="10.0" fill="#FF0000" stroke="#000" stroke-width="1"/><path d="M1107.5 241.0V262.0" stroke="#000" stroke-width="1"/><rect x="1106.5" y="241.5" width="2" height="20.0" fill="#90EE90" stroke="#000" stroke-width="1"/><rect x="1109.5" y="235.5" width="2" height="16.0" fill="#FF0000" stroke="#000" stroke-width="1"/></g>
<polygon points="480.2,197 500.8,197 490.5,206.6" fill="#8B0000"/><polygon points="471.2,213 491.8,213 481.5,222.6" fill="#8B0000"/><path d="M485.5 230 L492 222 L493 230" fill="none" stroke="#8B0000" stroke-width="2.5"/><circle cx="578.9" cy="322.8" r="3.7" fill="#006400"/><line x1="571" y1="356.5" x2="580" y2="356.5" stroke="#006400" stroke-width="2.8"/><polygon points="577.2,375 587.7,384.7 566.7,384.7" fill="#006400"/><circle cx="681" cy="491" r="4" fill="#00FF00"/><circle cx="684" cy="507" r="4" fill="#00FF00"/><circle cx="708" cy="512" r="4" fill="#00FF00"/><circle cx="711" cy="518" r="4" fill="#00FF00"/><circle cx="681" cy="501" r="4" fill="#006400"/><circle cx="684" cy="518" r="4" fill="#006400"/><circle cx="708" cy="523.5" r="4" fill="#006400"/><circle cx="711" cy="528.6" r="4" fill="#006400"/><circle cx="744" cy="486" r="4" fill="#006400"/><circle cx="759" cy="526" r="4" fill="#FF0000"/><circle cx="801" cy="483" r="4" fill="#FF0000"/><circle cx="825" cy="434" r="4" fill="#FF0000"/><circle cx="828" cy="423" r="4" fill="#FF0000"/><circle cx="860.7" cy="401.8" r="4" fill="#FF0000"/><circle cx="1062" cy="331" r="4" fill="#FF0000"/><circle cx="860.7" cy="391" r="4" fill="#8B0000"/><polyline points="663.3,528.6 692.8,561 711.5,566.6" fill="none" stroke="#00FF00" stroke-width="2.6"/><polyline points="663.3,524.5 693.6,556 711.5,562.5" fill="none" stroke="#006400" stroke-width="2.6"/><line x1="735.4" y1="502.8" x2="744.4" y2="517.8" stroke="#006400" stroke-width="2.6"/><polygon points="691,575.3 701.3,584.6999999999999 680.7,584.6999999999999" fill="#006400"/><polygon points="709.5,580.4 719.8,589.8 699.2,589.8" fill="#006400"/><polygon points="691,586.5 701.3,595.9 680.7,595.9" fill="#00FF00"/><polygon points="709.5,591.6 719.8,601.0 699.2,601.0" fill="#00FF00"/><polygon points="742.5,537 752.8,546.4 732.2,546.4" fill="#006400"/><polygon points="816.2,332.3 836.8,332.3 826.5,341.90000000000003" fill="#FF0000"/><polygon points="858.2,311 878.8,311 868.5,320.6" fill="#FF0000"/><polygon points="858.2,322 878.8,322 868.5,331.6" fill="#8B0000"/><line x1="810.3" y1="380.4" x2="828.6" y2="363.6" stroke="#FF0000" stroke-width="2.6"/><line x1="843.9" y1="347.5" x2="861.1" y2="342.4" stroke="#FF0000" stroke-width="2.6"/><line x1="843.9" y1="352.6" x2="861.1" y2="347.5" stroke="#8B0000" stroke-width="2.6"/><line x1="980.5" y1="393.6" x2="984.6" y2="400" stroke="#006400" stroke-width="6" stroke-linecap="round"/><line x1="969.9" y1="427.2" x2="984" y2="432.3" stroke="#006400" stroke-width="2.6"/><polygon points="982.5,450.5 992.8,459.9 972.2,459.9" fill="#006400"/><polygon points="1056.2,213.2 1076.8,213.2 1066.5,222.79999999999998" fill="#FF0000"/><line x1="1047.2" y1="277.2" x2="1069.1" y2="244.7" stroke="#FF0000" stroke-width="2.6"/>
<defs><filter id="bl" x="-5%" y="-50%" width="110%" height="200%"><feGaussianBlur stdDeviation="1.2"/></filter></defs>
<g font-family="'Liberation Serif','DejaVu Serif',serif" font-style="italic" font-size="26">
<g transform="translate(779,610) rotate(-20.1)"><text x="2.5" y="4" fill="#1e3a1c" opacity=".5" stroke="#1e3a1c" stroke-width="3" stroke-linejoin="round" textLength="386" lengthAdjust="spacing" filter="url(#bl)">www.trading-software-collection.com</text><text x="0" y="0" fill="#ff1a1a" stroke="#fff" stroke-width="3" paint-order="stroke" stroke-linejoin="round" textLength="386" lengthAdjust="spacing">www.trading-software-collection.com</text></g>
<g transform="translate(777,675) rotate(-20.3)"><text x="2.5" y="4" fill="#1e3a1c" opacity=".5" stroke="#1e3a1c" stroke-width="3" stroke-linejoin="round" textLength="442" lengthAdjust="spacing" filter="url(#bl)">andreybbrv@gmail.com, Skype: andreybbrv</text><text x="0" y="0" fill="#ff1a1a" stroke="#fff" stroke-width="3" paint-order="stroke" stroke-linejoin="round" textLength="442" lengthAdjust="spacing">andreybbrv@gmail.com, Skype: andreybbrv</text></g>
</g>
<path d="M1219.5 53V933" stroke="#000" stroke-width="1.6"/>
<path d="M1219 89.5H1225" stroke="#000" stroke-width="1"/>
<text x="1227" y="93.4" fill="#111">2002,00</text>
<path d="M1219 132.5H1225" stroke="#000" stroke-width="1"/>
<text x="1227" y="136.7" fill="#111">2000,00</text>
<path d="M1219 175.5H1225" stroke="#000" stroke-width="1"/>
<text x="1227" y="180.0" fill="#111">1998,00</text>
<path d="M1219 219.5H1225" stroke="#000" stroke-width="1"/>
<text x="1227" y="223.2" fill="#111">1996,00</text>
<path d="M1219 262.5H1225" stroke="#000" stroke-width="1"/>
<text x="1227" y="266.5" fill="#111">1994,00</text>
<path d="M1219 305.5H1225" stroke="#000" stroke-width="1"/>
<text x="1227" y="309.8" fill="#111">1992,00</text>
<path d="M1219 348.5H1225" stroke="#000" stroke-width="1"/>
<text x="1227" y="353.1" fill="#111">1990,00</text>
<path d="M1219 392.5H1225" stroke="#000" stroke-width="1"/>
<text x="1227" y="396.4" fill="#111">1988,00</text>
<path d="M1219 435.5H1225" stroke="#000" stroke-width="1"/>
<text x="1227" y="439.6" fill="#111">1986,00</text>
<path d="M1219 478.5H1225" stroke="#000" stroke-width="1"/>
<text x="1227" y="482.9" fill="#111">1984,00</text>
<path d="M1219 522.5H1225" stroke="#000" stroke-width="1"/>
<text x="1227" y="526.2" fill="#111">1982,00</text>
<path d="M1219 565.5H1225" stroke="#000" stroke-width="1"/>
<text x="1227" y="569.5" fill="#111">1980,00</text>
<path d="M1219 608.5H1225" stroke="#000" stroke-width="1"/>
<text x="1227" y="612.8" fill="#111">1978,00</text>
<path d="M1219 651.5H1225" stroke="#000" stroke-width="1"/>
<text x="1227" y="656.0" fill="#111">1976,00</text>
<path d="M1219 695.5H1225" stroke="#000" stroke-width="1"/>
<text x="1227" y="699.3" fill="#111">1974,00</text>
<polygon points="1220.5,251 1227,244.3 1269,244.3 1269,257.6 1227,257.6" fill="#000"/>
<text x="1228" y="255" fill="#fff">1994,50</text>
<rect x="1266.5" y="50.5" width="12" height="12" fill="none" stroke="#000" stroke-width="1.2"/><text x="1269.6" y="60.6" font-size="10" fill="#000">F</text>
<polygon points="1189.7,58.7 1189.7,77.3 1203.7,68" fill="none" stroke="#000" stroke-width="1.3"/><rect x="1207" y="58.5" width="3" height="19" fill="none" stroke="#000" stroke-width="1.2"/>
<path d="M0 731.7H1219.5" stroke="#000" stroke-width="1.6"/>
<path d="M0 859.5H1120M0 928.5H1120" stroke="#555" stroke-width="1"/>
<path d="M9,838.4 L11,837.7 L13,837.0 L15,836.6 L17,836.6 L19,836.6 L21,836.1 L23,835.1 L25,834.1 L27,833.8 L29,834.1 L31,834.4 L33,835.0 L35,835.8 L37,836.5 L39,837.3 L41,838.0 L43,838.7 L45,839.4 L47,840.0 L49,840.7 L51,841.3 L53,841.8 L55,842.3 L57,841.4 L59,840.5 L61,840.0 L63,839.9 L65,839.8 L67,840.2 L69,841.2 L71,842.2 L73,842.7 L75,842.7 L77,842.7 L79,843.2 L81,844.2 L83,845.3 L85,846.7 L87,848.4 L89,850.1 L91,851.9 L93,853.6 L95,853.9 L97,852.5 L99,851.5 L101,850.8 L103,850.1 L105,849.5 L107,848.8 L109,848.1 L111,847.3 L113,846.3 L115,845.3 L117,844.4 L119,843.5 L121,842.7 L123,842.1 L125,841.6 L127,841.2 L129,841.2 L131,841.6 L133,842.1 L135,842.5 L137,843.0 L139,843.5 L141,844.1 L143,844.8 L145,845.4 L147,846.0 L149,846.4 L151,846.8 L153,848.0 L155,850.0 L157,852.0 L159,854.3 L161,857.0 L163,859.7 L165,861.8 L167,863.5 L169,865.2 L171,866.5 L173,867.5 L175,868.5 L177,869.4 L179,870.3 L181,871.2 L183,871.9 L185,872.4 L187,872.9 L189,872.7 L191,871.6 L193,868.7 L195,865.8 L197,862.9 L199,859.8 L201,856.7 L203,853.7 L205,850.6 L207,847.5 L209,844.5 L211,841.3 L213,838.2 L215,835.1 L217,832.1 L219,829.0 L221,826.0 L223,822.9 L225,819.8 L227,816.8 L229,813.9 L231,811.9 L233,810.6 L235,809.6 L237,808.9 L239,808.9 L241,809.6 L243,810.7 L245,812.0 L247,813.3 L249,814.3 L251,815.0 L253,815.7 L255,816.3 L257,817.0 L259,817.7 L261,818.6 L263,819.7 L265,820.8 L267,822.6 L269,825.0 L271,827.3 L273,829.9 L275,832.5 L277,835.2 L279,837.8 L281,840.2 L283,842.5 L285,844.6 L287,846.2 L289,847.9 L291,849.5 L293,850.9 L295,852.3 L297,853.5 L299,854.5 L301,855.5 L303,856.5 L305,857.5 L307,858.5 L309,859.3 L311,860.0 L313,860.7 L315,861.3 L317,862.0 L319,862.7 L321,863.8 L323,865.5 L325,867.2 L327,868.7 L329,870.1 L331,871.5 L333,872.1 L335,871.8 L337,871.3 L339,870.8 L341,870.3 L343,870.1 L345,870.4 L347,870.7 L349,870.3 L351,869.5 L353,868.0 L355,866.0 L357,864.0 L359,862.2 L361,860.5 L363,858.8 L365,857.0 L367,855.0 L369,852.9 L371,850.4 L373,847.3 L375,844.9 L377,843.2 L379,841.6 L381,839.9 L383,838.2 L385,836.5 L387,835.1 L389,834.1 L391,833.8 L393,834.1 L395,834.4 L397,834.6 L399,834.6 L401,834.6 L403,834.4 L405,834.1 L407,833.8 L409,833.9 L411,834.6 L413,835.3 L415,835.6 L417,835.6 L419,834.3 L421,831.8 L423,829.0 L425,825.9 L427,823.7 L429,822.4 L431,821.1 L433,820.1 L435,819.5 L437,819.0 L439,818.1 L441,816.9 L443,815.3 L445,813.2 L447,811.3 L449,809.5 L451,808.4 L453,808.0 L455,808.5 L457,809.9 L459,811.6 L461,813.7 L463,815.9 L465,818.1 L467,820.3 L469,822.4 L471,823.9 L473,824.9 L475,826.0 L477,827.0 L479,827.8 L481,828.5 L483,829.2 L485,829.6 L487,829.8 L489,829.9 L491,830.4 L493,831.1 L495,832.4 L497,834.0 L499,835.8 L501,837.6 L503,839.7 L505,841.7 L507,843.7 L509,845.8 L511,847.8 L513,849.8 L515,851.9 L517,854.0 L519,855.5 L521,856.5 L523,857.5 L525,858.2 L527,858.5 L529,858.8 L531,859.5 L533,860.5 L535,861.5 L537,862.7 L539,864.0 L541,865.3 L543,866.6 L545,867.8 L547,868.9 L549,868.9 L551,867.6 L553,865.5 L555,862.5 L557,859.5 L559,856.5 L561,854.3 L563,853.0 L565,851.6 L567,850.4 L569,849.3 L571,848.3 L573,847.3 L575,846.3 L577,845.3 L579,843.8 L581,841.7 L583,839.7 L585,837.6 L587,836.1 L589,835.1 L591,835.1 L593,836.1 L595,837.6 L597,839.7 L599,841.4 L601,842.8 L603,844.1 L605,845.8 L607,847.8 L609,849.9 L611,851.9 L613,854.0 L615,856.0 L617,857.7 L619,859.0 L621,860.3 L623,862.0 L625,864.0 L627,866.0 L629,868.5 L631,871.7 L633,874.5 L635,877.0 L637,879.3 L639,881.4 L641,882.8 L643,883.6 L645,884.4 L647,883.6 L649,882.8 L651,881.4 L653,879.3 L655,877.6 L657,876.1 L659,874.7 L661,873.7 L663,873.0 L665,872.3 L667,871.7 L669,871.0 L671,870.3 L673,869.7 L675,869.0 L677,868.3 L679,867.8 L681,867.4 L683,866.9 L685,866.9 L687,867.2 L689,867.5 L691,867.0 L693,865.7 L695,864.2 L697,862.8 L699,861.8 L701,861.2 L703,861.2 L705,861.8 L707,862.0 L709,862.0 L711,861.2 L713,859.8 L715,858.0 L717,856.0 L719,853.5 L721,850.3 L723,847.5 L725,845.0 L727,842.7 L729,840.7 L731,838.9 L733,837.4 L735,836.5 L737,836.3 L739,836.1 L741,836.1 L743,836.3 L745,836.5 L747,837.1 L749,838.2 L751,838.8 L753,838.9 L755,838.1 L757,836.5 L759,834.7 L761,832.9 L763,831.6 L765,830.8 L767,829.9 L769,829.0 L771,828.0 L773,827.0 L775,826.1 L777,825.5 L779,824.8 L781,824.1 L783,823.6 L785,823.1 L787,822.8 L789,822.8 L791,822.8 L793,823.0 L795,823.5 L797,823.2 L799,822.0 L801,820.1 L803,817.6 L805,815.9 L807,815.1 L809,815.0 L811,815.5 L813,816.0 L815,816.5 L817,816.4 L819,815.6 L821,814.6 L823,813.3 L825,812.3 L827,811.6 L829,810.9 L831,810.2 L833,809.4 L835,808.6 L837,808.0 L839,807.6 L841,807.2 L843,807.9 L845,809.7 L847,811.6 L849,813.7 L851,815.4 L853,816.6 L855,817.5 L857,817.8 L859,818.1 L861,818.2 L863,818.1 L865,818.0 L867,817.7 L869,817.0 L871,817.2 L873,818.2 L875,819.4 L877,820.7 L879,822.2 L881,824.0 L883,825.6 L885,827.2 L887,828.5 L889,829.8 L891,831.0 L893,832.0 L895,833.1 L897,834.1 L899,835.1 L901,836.1 L903,837.1 L905,838.2 L907,839.2 L909,840.2 L911,841.4 L913,842.5 L915,842.9 L917,842.7 L919,840.0 L921,837.9 L923,836.4 L925,835.4 L927,835.1 L929,834.8 L931,834.8 L933,835.3 L935,835.8 L937,836.5 L939,837.4 L941,838.2 L943,839.0 L945,839.7 L947,839.4 L949,838.2 L951,837.2 L953,836.4 L955,836.3 L957,836.8 L959,837.3 L961,838.0 L963,838.7 L965,839.4 L967,839.5 L969,839.0 L971,838.2 L973,837.1 L975,836.7 L977,836.8 L979,836.9 L981,837.3 L983,837.9 L985,837.4 L987,835.8 L989,834.1 L991,832.4 L993,831.6 L995,831.9 L997,832.9 L999,834.7 L1001,836.4 L1003,837.9 L1005,839.2 L1007,840.2 L1009,840.5 L1011,840.0 L1013,838.7 L1015,836.6 L1017,834.6 L1019,832.5 L1021,830.8 L1023,829.5 L1025,828.2 L1027,826.7 L1029,825.2 L1031,823.4 L1033,821.4 L1035,819.1 L1037,816.6 L1039,814.5 L1041,813.0 L1043,811.8 L1045,811.0 L1047,810.7 L1049,810.9 L1051,811.1 L1053,811.4 L1055,811.6 L1057,811.1 L1059,809.9 L1061,808.4 L1063,806.8 L1065,805.7 L1067,805.0 L1069,805.0 L1071,805.7 L1073,806.8 L1075,808.4 L1077,809.9 L1079,811.1 L1081,812.4 L1083,813.7 L1085,814.8 L1087,815.8 L1089,816.6 L1091,817.3 L1093,816.3 L1095,815.3 L1097,814.7 L1097,813.9 L1095,812.5 L1093,811.2 L1091,810.4 L1089,809.9 L1087,809.4 L1085,809.2 L1083,809.2 L1081,809.2 L1079,809.6 L1077,810.5 L1075,811.4 L1073,812.2 L1071,812.9 L1069,813.8 L1067,814.8 L1065,815.8 L1063,816.8 L1061,818.1 L1059,819.6 L1057,821.1 L1055,822.6 L1053,824.2 L1051,825.7 L1049,827.2 L1047,828.7 L1045,830.3 L1043,831.8 L1041,833.3 L1039,834.8 L1037,836.1 L1035,837.1 L1033,837.7 L1031,837.9 L1029,838.1 L1027,838.2 L1025,838.4 L1023,838.6 L1021,839.0 L1019,839.5 L1017,840.0 L1015,840.5 L1013,840.5 L1011,840.2 L1009,839.9 L1007,839.6 L1005,839.3 L1003,839.0 L1001,838.7 L999,838.5 L997,838.6 L995,838.8 L993,838.9 L991,839.0 L989,839.0 L987,839.1 L985,839.2 L983,839.4 L981,839.5 L979,839.5 L977,839.5 L975,839.5 L973,839.5 L971,839.5 L969,839.5 L967,839.5 L965,839.5 L963,839.5 L961,839.5 L959,839.5 L957,839.5 L955,839.5 L953,839.5 L951,839.5 L949,839.5 L947,839.4 L945,839.4 L943,839.3 L941,839.3 L939,839.2 L937,839.2 L935,839.1 L933,839.1 L931,839.0 L929,839.2 L927,839.5 L925,839.4 L923,838.7 L921,838.0 L919,837.0 L917,835.9 L915,834.8 L913,833.6 L911,832.4 L909,831.1 L907,829.9 L905,828.6 L903,827.3 L901,826.0 L899,824.9 L897,823.9 L895,822.9 L893,821.9 L891,821.0 L889,820.2 L887,819.5 L885,818.7 L883,818.0 L881,817.5 L879,817.0 L877,816.5 L875,815.9 L873,815.2 L871,814.4 L869,813.7 L867,813.1 L865,812.7 L863,812.4 L861,812.0 L859,811.8 L857,811.8 L855,811.8 L853,811.8 L851,811.9 L849,812.1 L847,812.4 L845,813.1 L843,814.2 L841,815.3 L839,816.1 L837,816.6 L835,817.1 L833,817.6 L831,818.1 L829,818.6 L827,819.2 L825,819.8 L823,820.5 L821,821.1 L819,821.6 L817,822.0 L815,822.4 L813,822.8 L811,823.2 L809,823.7 L807,824.2 L805,824.7 L803,825.2 L801,825.7 L799,826.3 L797,826.9 L795,827.5 L793,828.0 L791,828.6 L789,829.4 L787,830.3 L785,831.2 L783,832.2 L781,833.1 L779,834.0 L777,834.8 L775,835.6 L773,836.4 L771,837.2 L769,837.9 L767,838.5 L765,839.2 L763,839.8 L761,840.4 L759,841.0 L757,841.5 L755,842.0 L753,842.5 L751,843.6 L749,845.2 L747,846.9 L745,848.7 L743,850.5 L741,852.3 L739,854.1 L737,855.5 L735,856.5 L733,857.5 L731,858.5 L729,859.5 L727,860.4 L725,861.2 L723,862.1 L721,863.0 L719,863.8 L717,864.5 L715,865.1 L713,865.7 L711,866.4 L709,866.8 L707,867.1 L705,867.4 L703,867.6 L701,867.9 L699,868.4 L697,869.2 L695,869.9 L693,870.7 L691,871.5 L689,872.2 L687,872.9 L685,873.7 L683,874.4 L681,875.2 L679,875.9 L677,876.7 L675,877.4 L673,877.9 L671,878.4 L669,878.9 L667,879.1 L665,877.9 L663,876.8 L661,875.6 L659,874.4 L657,873.3 L655,872.2 L653,870.9 L651,869.6 L649,868.3 L647,867.0 L645,865.3 L643,863.5 L641,861.8 L639,860.1 L637,858.1 L635,856.1 L633,854.2 L631,852.2 L629,850.6 L627,849.1 L625,847.6 L623,846.1 L621,845.0 L619,844.0 L617,843.0 L615,842.0 L613,841.5 L611,841.3 L609,841.0 L607,840.8 L605,841.6 L603,843.0 L601,844.3 L599,845.8 L597,847.4 L595,849.0 L593,850.4 L591,851.8 L589,853.0 L587,854.4 L585,855.7 L583,857.2 L581,858.7 L579,860.2 L577,861.4 L575,862.4 L573,863.4 L571,864.4 L569,865.1 L567,865.3 L565,865.6 L563,865.8 L561,865.4 L559,863.4 L557,861.5 L555,859.8 L553,859.2 L551,858.5 L549,857.7 L547,856.5 L545,855.2 L543,854.0 L541,852.7 L539,851.0 L537,849.3 L535,847.7 L533,846.0 L531,844.4 L529,842.7 L527,841.2 L525,839.7 L523,838.2 L521,836.6 L519,835.1 L517,833.6 L515,832.9 L513,832.3 L511,831.6 L509,830.9 L507,830.3 L505,829.6 L503,828.8 L501,828.0 L499,827.1 L497,826.3 L495,825.4 L493,824.6 L491,823.3 L489,821.9 L487,820.4 L485,818.9 L483,817.5 L481,816.0 L479,815.1 L477,814.7 L475,814.3 L473,814.0 L471,813.6 L469,813.2 L467,813.8 L465,815.5 L463,817.0 L461,818.3 L459,819.7 L457,821.1 L455,822.4 L453,823.7 L451,825.2 L449,827.0 L447,828.6 L445,830.2 L443,831.5 L441,832.9 L439,833.9 L437,834.4 L435,834.9 L433,835.4 L431,835.9 L429,836.4 L427,836.9 L425,837.4 L423,837.7 L421,838.0 L419,838.3 L417,838.6 L415,839.0 L413,839.7 L411,840.4 L409,841.2 L407,842.2 L405,843.2 L403,844.4 L401,845.8 L399,847.1 L397,848.6 L395,850.3 L393,852.0 L391,853.8 L389,855.5 L387,857.1 L385,858.8 L383,860.5 L381,862.2 L379,863.8 L377,865.5 L375,867.2 L373,868.2 L371,868.8 L369,869.2 L367,869.8 L365,870.1 L363,870.3 L361,870.5 L359,870.7 L357,870.5 L355,869.9 L353,869.3 L351,868.5 L349,867.5 L347,866.6 L345,865.7 L343,864.8 L341,863.9 L339,863.0 L337,862.1 L335,861.2 L333,860.4 L331,859.5 L329,858.4 L327,857.2 L325,856.0 L323,854.7 L321,853.5 L319,852.2 L317,850.8 L315,849.3 L313,847.9 L311,846.5 L309,845.0 L307,843.3 L305,841.7 L303,840.1 L301,838.4 L299,836.8 L297,835.2 L295,833.5 L293,831.9 L291,830.3 L289,828.7 L287,827.1 L285,825.5 L283,823.8 L281,822.2 L279,820.9 L277,819.9 L275,818.8 L273,817.8 L271,817.1 L269,816.8 L267,816.5 L265,816.7 L263,817.5 L261,818.3 L259,819.2 L257,820.0 L255,820.6 L253,821.1 L251,821.6 L249,822.1 L247,823.2 L245,825.0 L243,826.6 L241,829.0 L239,832.0 L237,835.1 L235,838.3 L233,841.7 L231,845.1 L229,847.6 L227,849.6 L225,852.4 L223,855.2 L221,857.9 L219,860.4 L217,862.1 L215,863.7 L213,865.4 L211,867.0 L209,867.5 L207,868.0 L205,868.5 L203,869.0 L201,869.2 L199,869.5 L197,869.8 L195,870.0 L193,866.8 L191,863.5 L189,861.9 L187,860.2 L185,858.6 L183,857.0 L181,855.5 L179,854.0 L177,852.5 L175,851.0 L173,850.2 L171,849.3 L169,848.5 L167,847.7 L165,846.8 L163,846.0 L161,845.8 L159,845.7 L157,845.5 L155,845.4 L153,845.2 L151,845.1 L149,845.6 L147,846.9 L145,847.6 L143,847.9 L141,848.1 L139,848.4 L137,848.6 L135,848.9 L133,849.1 L131,849.4 L129,849.6 L127,849.9 L125,850.1 L123,850.4 L121,850.6 L119,850.9 L117,851.1 L115,851.4 L113,851.7 L111,852.1 L109,852.4 L107,852.8 L105,852.7 L103,852.0 L101,851.3 L99,850.0 L97,848.0 L95,846.0 L93,844.9 L91,843.9 L89,842.8 L87,841.8 L85,840.7 L83,840.2 L81,839.7 L79,839.3 L77,838.8 L75,838.3 L73,837.8 L71,837.6 L69,837.7 L67,837.8 L65,837.8 L63,837.9 L61,838.0 L59,838.0 L57,838.0 L55,838.0 L53,838.0 L51,838.0 L49,838.0 L47,837.9 L45,837.8 L43,837.7 L41,837.6 L39,837.8 L37,838.2 L35,838.7 L33,839.1 L31,839.5 L29,840.3 L27,841.5 L25,842.8 L23,844.0 L21,845.2 L19,846.2 L17,847.1 L15,847.9 L13,848.7 L11,849.6 L9,850.4Z" fill="#64ACBC" fill-opacity=".93"/>
<g shape-rendering="crispEdges"><rect x="1" y="766" width="1219" height="3" fill="#FF0000"/><rect x="1" y="905" width="1219" height="3" fill="#FF0000"/>
<rect x="1" y="789" width="1219" height="3" fill="#0000FF"/><rect x="1" y="882" width="1219" height="3" fill="#0000FF"/></g>
<path d="M6.0 837.6V814.0H9.0V837.6ZM9.0 837.6V809.0H17.0V837.6ZM17.0 837.6V816.0H20.0V837.6ZM20.0 837.6V810.0H30.0V837.6ZM30.0 837.6V813.0H33.0V837.6ZM33.0 837.6V816.0H36.0V837.6ZM36.0 837.6V823.0H39.0V837.6ZM39.0 837.6V826.5H42.0V837.6ZM42.0 837.6V829.5H45.0V837.6ZM45.0 837.6V832.0H48.0V837.6ZM48.0 837.6V834.6H51.0V837.6ZM51.0 837.6V835.6H57.0V837.6ZM57.0 837.6V829.0H66.0V837.6ZM66.0 837.6V834.6H69.0V837.6ZM69.0 837.6V836.0H72.0V837.6ZM114.0 837.6V836.0H117.0V837.6ZM117.0 837.6V828.5H120.0V837.6ZM120.0 837.6V822.4H126.0V837.6ZM126.0 837.6V824.4H132.0V837.6ZM132.0 837.6V827.5H135.0V837.6ZM135.0 837.6V830.5H138.0V837.6ZM138.0 837.6V833.6H141.0V837.6ZM141.0 837.6V835.6H144.0V837.6ZM198.0 837.6V834.6H201.0V837.6ZM201.0 837.6V823.0H204.0V837.6ZM204.0 837.6V811.0H207.0V837.6ZM207.0 837.6V798.0H210.0V837.6ZM210.0 837.6V787.0H213.0V837.6ZM213.0 837.6V773.6H216.0V837.6ZM216.0 837.6V763.5H219.0V837.6ZM219.0 837.6V755.0H222.0V837.6ZM222.0 837.6V748.0H240.0V837.6ZM240.0 837.6V755.0H243.0V837.6ZM243.0 837.6V766.5H246.0V837.6ZM246.0 837.6V781.7H249.0V837.6ZM249.0 837.6V789.0H252.0V837.6ZM252.0 837.6V793.0H255.0V837.6ZM255.0 837.6V800.0H258.0V837.6ZM258.0 837.6V805.0H261.0V837.6ZM261.0 837.6V806.0H264.0V837.6ZM264.0 837.6V812.0H267.0V837.6ZM267.0 837.6V814.0H270.0V837.6ZM363.0 837.6V823.4H366.0V837.6ZM366.0 837.6V823.4H369.0V837.6ZM369.0 837.6V807.0H372.0V837.6ZM372.0 837.6V802.0H375.0V837.6ZM375.0 837.6V798.0H381.0V837.6ZM381.0 837.6V795.0H384.0V837.6ZM384.0 837.6V788.0H393.0V837.6ZM393.0 837.6V796.0H396.0V837.6ZM396.0 837.6V804.0H399.0V837.6ZM399.0 837.6V807.0H402.0V837.6ZM402.0 837.6V805.0H411.0V837.6ZM411.0 837.6V814.0H414.0V837.6ZM414.0 837.6V817.0H417.0V837.6ZM417.0 837.6V809.0H420.0V837.6ZM420.0 837.6V799.0H423.0V837.6ZM423.0 837.6V788.0H426.0V837.6ZM426.0 837.6V784.0H429.0V837.6ZM429.0 837.6V780.7H438.0V837.6ZM438.0 837.6V784.0H441.0V837.6ZM441.0 837.6V779.7H444.0V837.6ZM444.0 837.6V774.6H447.0V837.6ZM447.0 837.6V768.0H456.0V837.6ZM456.0 837.6V775.6H459.0V837.6ZM459.0 837.6V782.8H462.0V837.6ZM462.0 837.6V794.0H465.0V837.6ZM465.0 837.6V805.0H468.0V837.6ZM468.0 837.6V815.0H471.0V837.6ZM471.0 837.6V824.4H474.0V837.6ZM474.0 837.6V830.5H477.0V837.6ZM477.0 837.6V835.0H480.0V837.6ZM489.0 837.6V836.5H495.0V837.6ZM558.0 837.6V836.5H561.0V837.6ZM561.0 837.6V832.6H564.0V837.6ZM564.0 837.6V827.5H570.0V837.6ZM570.0 837.6V825.4H576.0V837.6ZM576.0 837.6V824.4H579.0V837.6ZM579.0 837.6V815.3H582.0V837.6ZM582.0 837.6V807.0H585.0V837.6ZM585.0 837.6V801.0H591.0V837.6ZM591.0 837.6V804.0H594.0V837.6ZM594.0 837.6V813.0H597.0V837.6ZM597.0 837.6V823.4H600.0V837.6ZM600.0 837.6V835.6H603.0V837.6ZM714.0 837.6V829.5H717.0V837.6ZM717.0 837.6V816.3H720.0V837.6ZM720.0 837.6V805.0H723.0V837.6ZM723.0 837.6V801.0H726.0V837.6ZM726.0 837.6V796.0H729.0V837.6ZM729.0 837.6V792.5H738.0V837.6ZM738.0 837.6V795.0H741.0V837.6ZM741.0 837.6V799.0H744.0V837.6ZM744.0 837.6V802.0H747.0V837.6ZM747.0 837.6V805.0H750.0V837.6ZM750.0 837.6V811.0H753.0V837.6ZM753.0 837.6V815.3H756.0V837.6ZM756.0 837.6V809.0H759.0V837.6ZM759.0 837.6V798.0H762.0V837.6ZM762.0 837.6V797.0H768.0V837.6ZM768.0 837.6V798.0H771.0V837.6ZM771.0 837.6V795.0H777.0V837.6ZM777.0 837.6V792.0H780.0V837.6ZM780.0 837.6V790.9H786.0V837.6ZM786.0 837.6V788.9H792.0V837.6ZM792.0 837.6V792.9H795.0V837.6ZM795.0 837.6V796.0H798.0V837.6ZM798.0 837.6V794.0H801.0V837.6ZM801.0 837.6V787.8H804.0V837.6ZM804.0 837.6V778.7H810.0V837.6ZM810.0 837.6V782.8H813.0V837.6ZM813.0 837.6V787.8H816.0V837.6ZM816.0 837.6V792.0H819.0V837.6ZM819.0 837.6V789.0H822.0V837.6ZM822.0 837.6V786.8H825.0V837.6ZM825.0 837.6V785.8H828.0V837.6ZM828.0 837.6V784.8H831.0V837.6ZM831.0 837.6V779.7H834.0V837.6ZM834.0 837.6V777.7H843.0V837.6ZM843.0 837.6V785.8H846.0V837.6ZM846.0 837.6V796.0H849.0V837.6ZM849.0 837.6V811.2H852.0V837.6ZM852.0 837.6V813.0H855.0V837.6ZM855.0 837.6V811.0H861.0V837.6ZM861.0 837.6V807.0H864.0V837.6ZM864.0 837.6V806.0H867.0V837.6ZM867.0 837.6V809.0H870.0V837.6ZM870.0 837.6V813.0H873.0V837.6ZM873.0 837.6V818.0H876.0V837.6ZM876.0 837.6V824.4H879.0V837.6ZM879.0 837.6V828.5H882.0V837.6ZM921.0 837.6V829.5H927.0V837.6ZM927.0 837.6V828.0H933.0V837.6ZM933.0 837.6V830.5H936.0V837.6ZM936.0 837.6V834.6H942.0V837.6ZM942.0 837.6V835.6H948.0V837.6ZM948.0 837.6V834.6H951.0V837.6ZM951.0 837.6V832.6H957.0V837.6ZM957.0 837.6V834.6H966.0V837.6ZM966.0 837.6V831.0H975.0V837.6ZM975.0 837.6V832.6H981.0V837.6ZM981.0 837.6V834.6H984.0V837.6ZM984.0 837.6V822.4H990.0V837.6ZM990.0 837.6V817.3H996.0V837.6ZM996.0 837.6V820.4H999.0V837.6ZM999.0 837.6V836.6H1002.0V837.6ZM1014.0 837.6V824.4H1017.0V837.6ZM1017.0 837.6V814.7H1026.0V837.6ZM1026.0 837.6V809.0H1029.0V837.6ZM1029.0 837.6V800.0H1032.0V837.6ZM1032.0 837.6V788.0H1035.0V837.6ZM1035.0 837.6V778.7H1038.0V837.6ZM1038.0 837.6V777.7H1041.0V837.6ZM1041.0 837.6V775.0H1044.0V837.6ZM1044.0 837.6V773.6H1047.0V837.6ZM1047.0 837.6V775.6H1050.0V837.6ZM1050.0 837.6V778.7H1053.0V837.6ZM1053.0 837.6V784.8H1056.0V837.6ZM1056.0 837.6V789.9H1059.0V837.6ZM1059.0 837.6V783.8H1062.0V837.6ZM1062.0 837.6V778.7H1065.0V837.6ZM1065.0 837.6V778.0H1071.0V837.6ZM1071.0 837.6V784.8H1074.0V837.6ZM1074.0 837.6V797.0H1077.0V837.6ZM1077.0 837.6V802.0H1080.0V837.6ZM1080.0 837.6V805.0H1083.0V837.6ZM1083.0 837.6V807.0H1086.0V837.6ZM1086.0 837.6V809.0H1089.0V837.6ZM1089.0 837.6V810.6H1095.0V837.6ZM1095.0 837.6V809.0H1098.0V837.6ZM1098.0 837.6V806.0H1101.0V837.6ZM1101.0 837.6V805.0H1104.0V837.6ZM1104.0 837.6V801.0H1110.0V837.6Z" fill="#32CD32" shape-rendering="crispEdges"/>
<path d="M72.0 837.6V839.5H84.0V837.6ZM84.0 837.6V851.0H87.0V837.6ZM87.0 837.6V861.0H90.0V837.6ZM90.0 837.6V865.7H96.0V837.6ZM96.0 837.6V860.6H99.0V837.6ZM99.0 837.6V855.0H102.0V837.6ZM102.0 837.6V849.0H105.0V837.6ZM105.0 837.6V844.8H111.0V837.6ZM111.0 837.6V839.7H114.0V837.6ZM144.0 837.6V843.0H150.0V837.6ZM150.0 837.6V849.0H156.0V837.6ZM156.0 837.6V860.0H159.0V837.6ZM159.0 837.6V870.0H162.0V837.6ZM162.0 837.6V881.0H165.0V837.6ZM165.0 837.6V892.0H171.0V837.6ZM171.0 837.6V893.0H183.0V837.6ZM183.0 837.6V890.5H189.0V837.6ZM189.0 837.6V885.0H192.0V837.6ZM192.0 837.6V872.0H195.0V837.6ZM195.0 837.6V855.0H198.0V837.6ZM270.0 837.6V840.7H273.0V837.6ZM273.0 837.6V854.0H276.0V837.6ZM276.0 837.6V864.0H279.0V837.6ZM279.0 837.6V866.0H282.0V837.6ZM282.0 837.6V869.0H285.0V837.6ZM285.0 837.6V871.0H288.0V837.6ZM288.0 837.6V875.0H294.0V837.6ZM294.0 837.6V878.0H300.0V837.6ZM300.0 837.6V879.0H303.0V837.6ZM303.0 837.6V882.0H309.0V837.6ZM309.0 837.6V883.0H315.0V837.6ZM315.0 837.6V879.0H318.0V837.6ZM318.0 837.6V880.0H321.0V837.6ZM321.0 837.6V886.4H324.0V837.6ZM324.0 837.6V891.5H327.0V837.6ZM327.0 837.6V895.6H333.0V837.6ZM333.0 837.6V893.5H336.0V837.6ZM336.0 837.6V887.0H339.0V837.6ZM339.0 837.6V881.0H342.0V837.6ZM342.0 837.6V875.0H345.0V837.6ZM345.0 837.6V875.0H348.0V837.6ZM348.0 837.6V873.0H351.0V837.6ZM351.0 837.6V867.0H354.0V837.6ZM354.0 837.6V865.0H357.0V837.6ZM357.0 837.6V857.0H360.0V837.6ZM360.0 837.6V846.0H363.0V837.6ZM480.0 837.6V839.7H489.0V837.6ZM495.0 837.6V841.7H498.0V837.6ZM498.0 837.6V846.8H501.0V837.6ZM501.0 837.6V852.0H504.0V837.6ZM504.0 837.6V858.0H507.0V837.6ZM507.0 837.6V863.0H510.0V837.6ZM510.0 837.6V869.0H513.0V837.6ZM513.0 837.6V875.0H516.0V837.6ZM516.0 837.6V881.0H519.0V837.6ZM519.0 837.6V892.0H525.0V837.6ZM525.0 837.6V887.0H528.0V837.6ZM528.0 837.6V881.0H531.0V837.6ZM531.0 837.6V881.0H534.0V837.6ZM534.0 837.6V886.4H537.0V837.6ZM537.0 837.6V892.5H540.0V837.6ZM540.0 837.6V897.6H549.0V837.6ZM549.0 837.6V891.5H552.0V837.6ZM552.0 837.6V879.0H555.0V837.6ZM555.0 837.6V857.0H558.0V837.6ZM603.0 837.6V845.8H606.0V837.6ZM606.0 837.6V855.0H609.0V837.6ZM609.0 837.6V865.0H612.0V837.6ZM612.0 837.6V875.0H615.0V837.6ZM615.0 837.6V879.3H618.0V837.6ZM618.0 837.6V880.3H621.0V837.6ZM621.0 837.6V886.4H624.0V837.6ZM624.0 837.6V892.5H627.0V837.6ZM627.0 837.6V897.6H630.0V837.6ZM630.0 837.6V906.7H633.0V837.6ZM633.0 837.6V914.0H636.0V837.6ZM636.0 837.6V920.4H645.0V837.6ZM645.0 837.6V915.0H648.0V837.6ZM648.0 837.6V907.8H651.0V837.6ZM651.0 837.6V896.6H654.0V837.6ZM654.0 837.6V885.4H657.0V837.6ZM657.0 837.6V877.0H660.0V837.6ZM660.0 837.6V870.0H663.0V837.6ZM663.0 837.6V865.0H666.0V837.6ZM666.0 837.6V859.0H669.0V837.6ZM669.0 837.6V848.8H672.0V837.6ZM672.0 837.6V841.7H675.0V837.6ZM675.0 837.6V845.8H678.0V837.6ZM678.0 837.6V850.9H681.0V837.6ZM681.0 837.6V853.9H684.0V837.6ZM684.0 837.6V857.0H690.0V837.6ZM690.0 837.6V859.0H693.0V837.6ZM693.0 837.6V855.0H699.0V837.6ZM699.0 837.6V840.7H702.0V837.6ZM702.0 837.6V845.8H708.0V837.6ZM708.0 837.6V839.7H714.0V837.6ZM882.0 837.6V840.0H885.0V837.6ZM885.0 837.6V842.7H891.0V837.6ZM891.0 837.6V841.7H894.0V837.6ZM894.0 837.6V845.8H897.0V837.6ZM897.0 837.6V855.0H900.0V837.6ZM900.0 837.6V857.0H903.0V837.6ZM903.0 837.6V861.0H909.0V837.6ZM909.0 837.6V859.0H918.0V837.6ZM918.0 837.6V849.8H921.0V837.6ZM1002.0 837.6V841.0H1005.0V837.6ZM1005.0 837.6V844.8H1011.0V837.6Z" fill="#800000" shape-rendering="crispEdges"/>
<path d="M0 837.5H1120" stroke="#000" stroke-width="1.2"/>
<polyline points="9.0,850.4 20.0,845.8 30.0,839.7 40.0,837.6 50.0,838.0 60.0,838.0 72.0,837.6 85.0,840.7 95.0,846.0 100.0,851.0 106.0,853.0 114.0,851.5 122.0,850.5 134.0,849.0 146.0,847.5 150.0,845.0 163.0,846.0 175.0,851.0 183.0,857.0 191.0,863.5 195.0,870.0 203.0,869.0 211.0,867.0 219.5,860.0 227.6,848.8 230.0,846.8 236.0,836.6 242.0,827.5 248.0,822.4 256.0,820.4 266.0,816.3 272.0,817.3 280.0,821.4 290.0,829.5 300.0,837.6 310.0,845.8 320.0,852.9 330.0,859.0 340.0,863.5 348.0,867.0 352.0,869.0 358.0,870.8 366.0,870.0 374.0,868.0 380.0,863.0 386.0,858.0 392.0,852.9 398.0,847.8 404.0,843.7 410.0,840.7 416.0,838.7 424.0,837.6 432.0,835.6 440.0,833.6 446.0,829.5 452.0,824.4 458.0,820.4 464.0,816.3 468.0,813.0 480.0,815.3 492.5,824.4 504.7,829.5 517.0,833.6 529.0,842.7 541.3,852.9 549.4,858.0 555.5,860.0 561.6,866.0 569.8,865.0 577.9,861.0 586.0,855.0 594.0,849.8 600.0,845.0 606.3,840.7 614.5,841.7 622.6,845.8 630.7,851.9 638.9,860.0 647.0,867.0 655.0,872.2 660.0,875.0 667.3,879.3 675.4,877.3 683.6,874.2 691.7,871.2 700.0,868.0 710.0,866.7 720.0,863.5 730.0,859.0 738.0,855.0 746.0,847.8 752.0,842.7 760.0,840.7 770.0,837.6 780.0,833.6 790.0,828.9 800.0,826.0 810.0,823.4 820.0,821.4 830.0,818.3 840.0,815.9 846.0,812.5 852.0,811.8 860.0,811.8 868.0,813.3 876.0,816.3 884.0,818.3 892.0,821.4 900.0,825.4 908.0,830.5 914.0,834.2 920.0,837.6 926.0,839.7 930.0,839.0 950.0,839.5 980.0,839.5 1000.0,838.5 1014.0,840.7 1022.0,838.7 1034.0,837.6 1038.0,835.6 1046.0,829.5 1054.0,823.4 1062.0,817.3 1070.0,813.3 1074.0,811.8 1080.0,809.2 1086.0,809.2 1092.0,810.6 1098.0,814.5" fill="none" stroke="#000" stroke-width="2" stroke-linejoin="round"/>
<polyline points="8,838.7 11,837.7 14,836.6 17,836.6 20,836.6 23,835.1 26,833.6 29,834.1 32,834.6 35,835.8 38,836.9 41,838.0 44,839.0 47,840.0 50,841.0 53,841.8 56,841.8 59,840.5 62,839.9 65,839.8 68,840.7 71,842.2 74,842.7 77,842.7 80,843.7 83,845.3 86,847.5 89,850.1 92,852.8 95,853.9 98,851.9 101,850.8 104,849.8 107,848.8 110,847.8 113,846.3 116,844.8 119,843.5 122,842.3 125,841.6 128,841.0 131,841.6 134,842.3 137,843.0 140,843.7 143,844.8 146,845.8 149,846.4 152,847.0 155,850.0 158,853.0 161,857.0 164,861.0 167,863.5 170,866.0 173,867.5 176,869.0 179,870.3 182,871.6 185,872.4 188,873.2 191,871.6 194,867.3 197,862.9 200,858.3 203,853.7 206,849.1 209,844.5 212,839.8 215,835.1 218,830.5 221,826.0 224,821.3 227,816.8 230,812.5 233,810.6 236,809.2 239,808.9 242,810.0 245,812.0 248,814.0 251,815.0 254,816.0 257,817.0 260,818.0 263,819.7 266,821.4 269,825.0 272,828.5 275,832.5 278,836.6 281,840.2 284,843.7 287,846.2 290,848.8 293,850.9 296,853.0 299,854.5 302,856.0 305,857.5 308,859.0 311,860.0 314,861.0 317,862.0 320,863.0 323,865.5 326,868.0 329,870.1 332,872.2 335,871.8 338,871.1 341,870.3 344,870.3 347,870.7 350,869.9 353,868.0 356,865.0 359,862.2 362,859.7 365,857.0 368,853.9 371,850.4 374,845.8 377,843.2 380,840.7 383,838.2 386,835.6 389,834.1 392,833.9 395,834.4 398,834.6 401,834.6 404,834.3 407,833.8 410,834.3 413,835.3 416,835.6 419,834.3 422,830.5 425,825.9 428,823.1 431,821.1 434,819.8 437,819.0 440,817.5 443,815.3 446,812.2 449,809.5 452,808.2 455,808.5 458,810.6 461,813.7 464,817.0 467,820.3 470,823.4 473,824.9 476,826.5 479,827.8 482,828.8 485,829.6 488,829.8 491,830.4 494,831.5 497,834.0 500,836.6 503,839.7 506,842.7 509,845.8 512,848.8 515,851.9 518,855.0 521,856.5 524,858.0 527,858.5 530,859.0 533,860.5 536,862.0 539,864.0 542,866.0 545,867.8 548,869.5 551,867.6 554,864.0 557,859.5 560,855.0 563,853.0 566,850.9 569,849.3 572,847.8 575,846.3 578,844.8 581,841.7 584,838.7 587,836.1 590,834.6 593,836.1 596,838.7 599,841.4 602,843.4 605,845.8 608,848.9 611,851.9 614,855.0 617,857.7 620,859.7 623,862.0 626,865.0 629,868.5 632,873.2 635,877.0 638,880.3 641,882.8 644,884.0 647,883.6 650,882.4 653,879.3 656,876.9 659,874.7 662,873.3 665,872.3 668,871.3 671,870.3 674,869.3 677,868.3 680,867.6 683,866.9 686,867.0 689,867.5 692,866.4 695,864.2 698,862.0 701,861.2 704,861.5 707,862.0 710,862.0 713,859.8 716,857.0 719,853.5 722,848.8 725,845.0 728,841.7 731,838.9 734,836.6 737,836.3 740,836.0 743,836.3 746,836.6 749,838.2 752,838.9 755,838.1 758,835.6 761,832.9 764,831.2 767,829.9 770,828.5 773,827.0 776,825.8 779,824.8 782,823.9 785,823.1 788,822.8 791,822.8 794,823.3 797,823.2 800,821.4 803,817.6 806,815.5 809,815.0 812,815.7 815,816.5 818,816.0 821,814.6 824,812.6 827,811.6 830,810.6 833,809.4 836,808.2 839,807.6 842,807.0 845,809.7 848,812.7 851,815.4 854,817.3 857,817.8 860,818.3 863,818.1 866,818.0 869,817.0 872,817.7 875,819.4 878,821.4 881,824.0 884,826.5 887,828.5 890,830.5 893,832.0 896,833.6 899,835.1 902,836.6 905,838.2 908,839.7 911,841.4 914,843.0 917,842.7 920,838.7 923,836.4 926,835.3 929,834.8 932,835.1 935,835.8 938,836.9 941,838.2 944,839.4 947,839.4 950,837.6 953,836.4 956,836.5 959,837.3 962,838.3 965,839.4 968,839.2 971,838.2 974,836.6 977,836.8 980,837.0 983,837.9 986,836.6 989,834.1 992,831.5 995,831.9 998,833.8 1001,836.4 1004,838.7 1007,840.2 1010,840.2 1013,838.7 1016,835.6 1019,832.5 1022,830.2 1025,828.2 1028,826.0 1031,823.4 1034,820.4 1037,816.6 1040,813.8 1043,811.8 1046,810.6 1049,810.9 1052,811.2 1055,811.6 1058,810.5 1061,808.4 1064,806.0 1067,805.0 1070,805.4 1073,806.8 1076,809.2 1079,811.1 1082,813.0 1085,814.8 1088,816.3 1091,817.3 1094,815.8 1097,814.7 1100,813.9 1103,812.9 1106,811.9 1109,810.8" fill="none" stroke="#000" stroke-width="7.2" stroke-linejoin="round" stroke-linecap="round" shape-rendering="crispEdges"/>
<path d="M8 838.7L11 837.7M11 837.7L14 836.6M14 836.6L17 836.6M17 836.6L20 836.6M20 836.6L23 835.1M23 835.1L26 833.6M26 833.6L29 834.1M53 841.8L56 841.8M56 841.8L59 840.5M59 840.5L62 839.9M62 839.9L65 839.8M95 853.9L98 851.9M98 851.9L101 850.8M101 850.8L104 849.8M104 849.8L107 848.8M107 848.8L110 847.8M110 847.8L113 846.3M113 846.3L116 844.8M116 844.8L119 843.5M119 843.5L122 842.3M122 842.3L125 841.6M125 841.6L128 841.0M185 872.4L188 873.2M188 873.2L191 871.6M191 871.6L194 867.3M194 867.3L197 862.9M197 862.9L200 858.3M200 858.3L203 853.7M203 853.7L206 849.1M206 849.1L209 844.5M209 844.5L212 839.8M212 839.8L215 835.1M215 835.1L218 830.5M218 830.5L221 826.0M221 826.0L224 821.3M224 821.3L227 816.8M227 816.8L230 812.5M230 812.5L233 810.6M233 810.6L236 809.2M236 809.2L239 808.9M335 871.8L338 871.1M338 871.1L341 870.3M341 870.3L344 870.3M344 870.3L347 870.7M347 870.7L350 869.9M350 869.9L353 868.0M353 868.0L356 865.0M356 865.0L359 862.2M359 862.2L362 859.7M362 859.7L365 857.0M365 857.0L368 853.9M368 853.9L371 850.4M371 850.4L374 845.8M374 845.8L377 843.2M377 843.2L380 840.7M380 840.7L383 838.2M383 838.2L386 835.6M386 835.6L389 834.1M389 834.1L392 833.9M398 834.6L401 834.6M401 834.6L404 834.3M404 834.3L407 833.8M413 835.3L416 835.6M416 835.6L419 834.3M419 834.3L422 830.5M422 830.5L425 825.9M425 825.9L428 823.1M428 823.1L431 821.1M431 821.1L434 819.8M434 819.8L437 819.0M437 819.0L440 817.5M440 817.5L443 815.3M443 815.3L446 812.2M446 812.2L449 809.5M449 809.5L452 808.2M548 869.5L551 867.6M551 867.6L554 864.0M554 864.0L557 859.5M557 859.5L560 855.0M560 855.0L563 853.0M563 853.0L566 850.9M566 850.9L569 849.3M569 849.3L572 847.8M572 847.8L575 846.3M575 846.3L578 844.8M578 844.8L581 841.7M581 841.7L584 838.7M584 838.7L587 836.1M587 836.1L590 834.6M644 884.0L647 883.6M647 883.6L650 882.4M650 882.4L653 879.3M653 879.3L656 876.9M656 876.9L659 874.7M659 874.7L662 873.3M662 873.3L665 872.3M665 872.3L668 871.3M668 871.3L671 870.3M671 870.3L674 869.3M674 869.3L677 868.3M677 868.3L680 867.6M680 867.6L683 866.9M683 866.9L686 867.0M686 867.0L689 867.5M689 867.5L692 866.4M692 866.4L695 864.2M695 864.2L698 862.0M698 862.0L701 861.2M701 861.2L704 861.5M707 862.0L710 862.0M710 862.0L713 859.8M713 859.8L716 857.0M716 857.0L719 853.5M719 853.5L722 848.8M722 848.8L725 845.0M725 845.0L728 841.7M728 841.7L731 838.9M731 838.9L734 836.6M734 836.6L737 836.3M737 836.3L740 836.0M740 836.0L743 836.3M752 838.9L755 838.1M755 838.1L758 835.6M758 835.6L761 832.9M761 832.9L764 831.2M764 831.2L767 829.9M767 829.9L770 828.5M770 828.5L773 827.0M773 827.0L776 825.8M776 825.8L779 824.8M779 824.8L782 823.9M782 823.9L785 823.1M785 823.1L788 822.8M788 822.8L791 822.8M794 823.3L797 823.2M797 823.2L800 821.4M800 821.4L803 817.6M803 817.6L806 815.5M806 815.5L809 815.0M815 816.5L818 816.0M818 816.0L821 814.6M821 814.6L824 812.6M824 812.6L827 811.6M827 811.6L830 810.6M830 810.6L833 809.4M833 809.4L836 808.2M836 808.2L839 807.6M860 818.3L863 818.1M863 818.1L866 818.0M866 818.0L869 817.0M914 843.0L917 842.7M917 842.7L920 838.7M920 838.7L923 836.4M923 836.4L926 835.3M926 835.3L929 834.8M944 839.4L947 839.4M947 839.4L950 837.6M950 837.6L953 836.4M953 836.4L956 836.5M965 839.4L968 839.2M968 839.2L971 838.2M971 838.2L974 836.6M974 836.6L977 836.8M980 837.0L983 837.9M983 837.9L986 836.6M986 836.6L989 834.1M989 834.1L992 831.5M992 831.5L995 831.9M1007 840.2L1010 840.2M1010 840.2L1013 838.7M1013 838.7L1016 835.6M1016 835.6L1019 832.5M1019 832.5L1022 830.2M1022 830.2L1025 828.2M1025 828.2L1028 826.0M1028 826.0L1031 823.4M1031 823.4L1034 820.4M1034 820.4L1037 816.6M1037 816.6L1040 813.8M1040 813.8L1043 811.8M1043 811.8L1046 810.6M1046 810.6L1049 810.9M1052 811.2L1055 811.6M1055 811.6L1058 810.5M1058 810.5L1061 808.4M1061 808.4L1064 806.0M1064 806.0L1067 805.0M1091 817.3L1094 815.8M1094 815.8L1097 814.7M1097 814.7L1100 813.9M1100 813.9L1103 812.9M1103 812.9L1106 811.9M1106 811.9L1109 810.8" fill="none" stroke="#008A00" stroke-width="5" stroke-linecap="round" shape-rendering="crispEdges"/>
<g fill="#006400"><circle cx="8" cy="838.7" r="2.3"/><circle cx="11" cy="837.7" r="2.3"/><circle cx="14" cy="836.6" r="2.3"/><circle cx="17" cy="836.6" r="2.3"/><circle cx="20" cy="836.6" r="2.3"/><circle cx="23" cy="835.1" r="2.3"/><circle cx="26" cy="833.6" r="2.3"/><circle cx="53" cy="841.8" r="2.3"/><circle cx="56" cy="841.8" r="2.3"/><circle cx="59" cy="840.5" r="2.3"/><circle cx="62" cy="839.9" r="2.3"/><circle cx="95" cy="853.9" r="2.3"/><circle cx="98" cy="851.9" r="2.3"/><circle cx="101" cy="850.8" r="2.3"/><circle cx="104" cy="849.8" r="2.3"/><circle cx="107" cy="848.8" r="2.3"/><circle cx="110" cy="847.8" r="2.3"/><circle cx="113" cy="846.3" r="2.3"/><circle cx="116" cy="844.8" r="2.3"/><circle cx="119" cy="843.5" r="2.3"/><circle cx="122" cy="842.3" r="2.3"/><circle cx="125" cy="841.6" r="2.3"/><circle cx="185" cy="872.4" r="2.3"/><circle cx="188" cy="873.2" r="2.3"/><circle cx="191" cy="871.6" r="2.3"/><circle cx="194" cy="867.3" r="2.3"/><circle cx="197" cy="862.9" r="2.3"/><circle cx="200" cy="858.3" r="2.3"/><circle cx="203" cy="853.7" r="2.3"/><circle cx="206" cy="849.1" r="2.3"/><circle cx="209" cy="844.5" r="2.3"/><circle cx="212" cy="839.8" r="2.3"/><circle cx="215" cy="835.1" r="2.3"/><circle cx="218" cy="830.5" r="2.3"/><circle cx="221" cy="826.0" r="2.3"/><circle cx="224" cy="821.3" r="2.3"/><circle cx="227" cy="816.8" r="2.3"/><circle cx="230" cy="812.5" r="2.3"/><circle cx="233" cy="810.6" r="2.3"/><circle cx="236" cy="809.2" r="2.3"/><circle cx="335" cy="871.8" r="2.3"/><circle cx="338" cy="871.1" r="2.3"/><circle cx="341" cy="870.3" r="2.3"/><circle cx="344" cy="870.3" r="2.3"/><circle cx="347" cy="870.7" r="2.3"/><circle cx="350" cy="869.9" r="2.3"/><circle cx="353" cy="868.0" r="2.3"/><circle cx="356" cy="865.0" r="2.3"/><circle cx="359" cy="862.2" r="2.3"/><circle cx="362" cy="859.7" r="2.3"/><circle cx="365" cy="857.0" r="2.3"/><circle cx="368" cy="853.9" r="2.3"/><circle cx="371" cy="850.4" r="2.3"/><circle cx="374" cy="845.8" r="2.3"/><circle cx="377" cy="843.2" r="2.3"/><circle cx="380" cy="840.7" r="2.3"/><circle cx="383" cy="838.2" r="2.3"/><circle cx="386" cy="835.6" r="2.3"/><circle cx="389" cy="834.1" r="2.3"/><circle cx="398" cy="834.6" r="2.3"/><circle cx="401" cy="834.6" r="2.3"/><circle cx="404" cy="834.3" r="2.3"/><circle cx="413" cy="835.3" r="2.3"/><circle cx="416" cy="835.6" r="2.3"/><circle cx="419" cy="834.3" r="2.3"/><circle cx="422" cy="830.5" r="2.3"/><circle cx="425" cy="825.9" r="2.3"/><circle cx="428" cy="823.1" r="2.3"/><circle cx="431" cy="821.1" r="2.3"/><circle cx="434" cy="819.8" r="2.3"/><circle cx="437" cy="819.0" r="2.3"/><circle cx="440" cy="817.5" r="2.3"/><circle cx="443" cy="815.3" r="2.3"/><circle cx="446" cy="812.2" r="2.3"/><circle cx="449" cy="809.5" r="2.3"/><circle cx="548" cy="869.5" r="2.3"/><circle cx="551" cy="867.6" r="2.3"/><circle cx="554" cy="864.0" r="2.3"/><circle cx="557" cy="859.5" r="2.3"/><circle cx="560" cy="855.0" r="2.3"/><circle cx="563" cy="853.0" r="2.3"/><circle cx="566" cy="850.9" r="2.3"/><circle cx="569" cy="849.3" r="2.3"/><circle cx="572" cy="847.8" r="2.3"/><circle cx="575" cy="846.3" r="2.3"/><circle cx="578" cy="844.8" r="2.3"/><circle cx="581" cy="841.7" r="2.3"/><circle cx="584" cy="838.7" r="2.3"/><circle cx="587" cy="836.1" r="2.3"/><circle cx="644" cy="884.0" r="2.3"/><circle cx="647" cy="883.6" r="2.3"/><circle cx="650" cy="882.4" r="2.3"/><circle cx="653" cy="879.3" r="2.3"/><circle cx="656" cy="876.9" r="2.3"/><circle cx="659" cy="874.7" r="2.3"/><circle cx="662" cy="873.3" r="2.3"/><circle cx="665" cy="872.3" r="2.3"/><circle cx="668" cy="871.3" r="2.3"/><circle cx="671" cy="870.3" r="2.3"/><circle cx="674" cy="869.3" r="2.3"/><circle cx="677" cy="868.3" r="2.3"/><circle cx="680" cy="867.6" r="2.3"/><circle cx="683" cy="866.9" r="2.3"/><circle cx="686" cy="867.0" r="2.3"/><circle cx="689" cy="867.5" r="2.3"/><circle cx="692" cy="866.4" r="2.3"/><circle cx="695" cy="864.2" r="2.3"/><circle cx="698" cy="862.0" r="2.3"/><circle cx="701" cy="861.2" r="2.3"/><circle cx="707" cy="862.0" r="2.3"/><circle cx="710" cy="862.0" r="2.3"/><circle cx="713" cy="859.8" r="2.3"/><circle cx="716" cy="857.0" r="2.3"/><circle cx="719" cy="853.5" r="2.3"/><circle cx="722" cy="848.8" r="2.3"/><circle cx="725" cy="845.0" r="2.3"/><circle cx="728" cy="841.7" r="2.3"/><circle cx="731" cy="838.9" r="2.3"/><circle cx="734" cy="836.6" r="2.3"/><circle cx="737" cy="836.3" r="2.3"/><circle cx="740" cy="836.0" r="2.3"/><circle cx="752" cy="838.9" r="2.3"/><circle cx="755" cy="838.1" r="2.3"/><circle cx="758" cy="835.6" r="2.3"/><circle cx="761" cy="832.9" r="2.3"/><circle cx="764" cy="831.2" r="2.3"/><circle cx="767" cy="829.9" r="2.3"/><circle cx="770" cy="828.5" r="2.3"/><circle cx="773" cy="827.0" r="2.3"/><circle cx="776" cy="825.8" r="2.3"/><circle cx="779" cy="824.8" r="2.3"/><circle cx="782" cy="823.9" r="2.3"/><circle cx="785" cy="823.1" r="2.3"/><circle cx="788" cy="822.8" r="2.3"/><circle cx="794" cy="823.3" r="2.3"/><circle cx="797" cy="823.2" r="2.3"/><circle cx="800" cy="821.4" r="2.3"/><circle cx="803" cy="817.6" r="2.3"/><circle cx="806" cy="815.5" r="2.3"/><circle cx="815" cy="816.5" r="2.3"/><circle cx="818" cy="816.0" r="2.3"/><circle cx="821" cy="814.6" r="2.3"/><circle cx="824" cy="812.6" r="2.3"/><circle cx="827" cy="811.6" r="2.3"/><circle cx="830" cy="810.6" r="2.3"/><circle cx="833" cy="809.4" r="2.3"/><circle cx="836" cy="808.2" r="2.3"/><circle cx="860" cy="818.3" r="2.3"/><circle cx="863" cy="818.1" r="2.3"/><circle cx="866" cy="818.0" r="2.3"/><circle cx="914" cy="843.0" r="2.3"/><circle cx="917" cy="842.7" r="2.3"/><circle cx="920" cy="838.7" r="2.3"/><circle cx="923" cy="836.4" r="2.3"/><circle cx="926" cy="835.3" r="2.3"/><circle cx="944" cy="839.4" r="2.3"/><circle cx="947" cy="839.4" r="2.3"/><circle cx="950" cy="837.6" r="2.3"/><circle cx="953" cy="836.4" r="2.3"/><circle cx="965" cy="839.4" r="2.3"/><circle cx="968" cy="839.2" r="2.3"/><circle cx="971" cy="838.2" r="2.3"/><circle cx="974" cy="836.6" r="2.3"/><circle cx="980" cy="837.0" r="2.3"/><circle cx="983" cy="837.9" r="2.3"/><circle cx="986" cy="836.6" r="2.3"/><circle cx="989" cy="834.1" r="2.3"/><circle cx="992" cy="831.5" r="2.3"/><circle cx="1007" cy="840.2" r="2.3"/><circle cx="1010" cy="840.2" r="2.3"/><circle cx="1013" cy="838.7" r="2.3"/><circle cx="1016" cy="835.6" r="2.3"/><circle cx="1019" cy="832.5" r="2.3"/><circle cx="1022" cy="830.2" r="2.3"/><circle cx="1025" cy="828.2" r="2.3"/><circle cx="1028" cy="826.0" r="2.3"/><circle cx="1031" cy="823.4" r="2.3"/><circle cx="1034" cy="820.4" r="2.3"/><circle cx="1037" cy="816.6" r="2.3"/><circle cx="1040" cy="813.8" r="2.3"/><circle cx="1043" cy="811.8" r="2.3"/><circle cx="1046" cy="810.6" r="2.3"/><circle cx="1052" cy="811.2" r="2.3"/><circle cx="1055" cy="811.6" r="2.3"/><circle cx="1058" cy="810.5" r="2.3"/><circle cx="1061" cy="808.4" r="2.3"/><circle cx="1064" cy="806.0" r="2.3"/><circle cx="1091" cy="817.3" r="2.3"/><circle cx="1094" cy="815.8" r="2.3"/><circle cx="1097" cy="814.7" r="2.3"/><circle cx="1100" cy="813.9" r="2.3"/><circle cx="1103" cy="812.9" r="2.3"/><circle cx="1106" cy="811.9" r="2.3"/></g>
<path d="M29 834.1L32 834.6M32 834.6L35 835.8M35 835.8L38 836.9M38 836.9L41 838.0M41 838.0L44 839.0M44 839.0L47 840.0M47 840.0L50 841.0M50 841.0L53 841.8M65 839.8L68 840.7M68 840.7L71 842.2M71 842.2L74 842.7M74 842.7L77 842.7M77 842.7L80 843.7M80 843.7L83 845.3M83 845.3L86 847.5M86 847.5L89 850.1M89 850.1L92 852.8M92 852.8L95 853.9M128 841.0L131 841.6M131 841.6L134 842.3M134 842.3L137 843.0M137 843.0L140 843.7M140 843.7L143 844.8M143 844.8L146 845.8M146 845.8L149 846.4M149 846.4L152 847.0M152 847.0L155 850.0M155 850.0L158 853.0M158 853.0L161 857.0M161 857.0L164 861.0M164 861.0L167 863.5M167 863.5L170 866.0M170 866.0L173 867.5M173 867.5L176 869.0M176 869.0L179 870.3M179 870.3L182 871.6M182 871.6L185 872.4M239 808.9L242 810.0M242 810.0L245 812.0M245 812.0L248 814.0M248 814.0L251 815.0M251 815.0L254 816.0M254 816.0L257 817.0M257 817.0L260 818.0M260 818.0L263 819.7M263 819.7L266 821.4M266 821.4L269 825.0M269 825.0L272 828.5M272 828.5L275 832.5M275 832.5L278 836.6M278 836.6L281 840.2M281 840.2L284 843.7M284 843.7L287 846.2M287 846.2L290 848.8M290 848.8L293 850.9M293 850.9L296 853.0M296 853.0L299 854.5M299 854.5L302 856.0M302 856.0L305 857.5M305 857.5L308 859.0M308 859.0L311 860.0M311 860.0L314 861.0M314 861.0L317 862.0M317 862.0L320 863.0M320 863.0L323 865.5M323 865.5L326 868.0M326 868.0L329 870.1M329 870.1L332 872.2M332 872.2L335 871.8M392 833.9L395 834.4M395 834.4L398 834.6M407 833.8L410 834.3M410 834.3L413 835.3M452 808.2L455 808.5M455 808.5L458 810.6M458 810.6L461 813.7M461 813.7L464 817.0M464 817.0L467 820.3M467 820.3L470 823.4M470 823.4L473 824.9M473 824.9L476 826.5M476 826.5L479 827.8M479 827.8L482 828.8M482 828.8L485 829.6M485 829.6L488 829.8M488 829.8L491 830.4M491 830.4L494 831.5M494 831.5L497 834.0M497 834.0L500 836.6M500 836.6L503 839.7M503 839.7L506 842.7M506 842.7L509 845.8M509 845.8L512 848.8M512 848.8L515 851.9M515 851.9L518 855.0M518 855.0L521 856.5M521 856.5L524 858.0M524 858.0L527 858.5M527 858.5L530 859.0M530 859.0L533 860.5M533 860.5L536 862.0M536 862.0L539 864.0M539 864.0L542 866.0M542 866.0L545 867.8M545 867.8L548 869.5M590 834.6L593 836.1M593 836.1L596 838.7M596 838.7L599 841.4M599 841.4L602 843.4M602 843.4L605 845.8M605 845.8L608 848.9M608 848.9L611 851.9M611 851.9L614 855.0M614 855.0L617 857.7M617 857.7L620 859.7M620 859.7L623 862.0M623 862.0L626 865.0M626 865.0L629 868.5M629 868.5L632 873.2M632 873.2L635 877.0M635 877.0L638 880.3M638 880.3L641 882.8M641 882.8L644 884.0M704 861.5L707 862.0M743 836.3L746 836.6M746 836.6L749 838.2M749 838.2L752 838.9M791 822.8L794 823.3M809 815.0L812 815.7M812 815.7L815 816.5M839 807.6L842 807.0M842 807.0L845 809.7M845 809.7L848 812.7M848 812.7L851 815.4M851 815.4L854 817.3M854 817.3L857 817.8M857 817.8L860 818.3M869 817.0L872 817.7M872 817.7L875 819.4M875 819.4L878 821.4M878 821.4L881 824.0M881 824.0L884 826.5M884 826.5L887 828.5M887 828.5L890 830.5M890 830.5L893 832.0M893 832.0L896 833.6M896 833.6L899 835.1M899 835.1L902 836.6M902 836.6L905 838.2M905 838.2L908 839.7M908 839.7L911 841.4M911 841.4L914 843.0M929 834.8L932 835.1M932 835.1L935 835.8M935 835.8L938 836.9M938 836.9L941 838.2M941 838.2L944 839.4M956 836.5L959 837.3M959 837.3L962 838.3M962 838.3L965 839.4M977 836.8L980 837.0M995 831.9L998 833.8M998 833.8L1001 836.4M1001 836.4L1004 838.7M1004 838.7L1007 840.2M1049 810.9L1052 811.2M1067 805.0L1070 805.4M1070 805.4L1073 806.8M1073 806.8L1076 809.2M1076 809.2L1079 811.1M1079 811.1L1082 813.0M1082 813.0L1085 814.8M1085 814.8L1088 816.3M1088 816.3L1091 817.3" fill="none" stroke="#FF0000" stroke-width="5" stroke-linecap="round" shape-rendering="crispEdges"/>
<line x1="171.7" y1="893.5" x2="184" y2="891.5" stroke="#00FF00" stroke-width="2.6"/>
<line x1="333.7" y1="895.6" x2="351.5" y2="875.2" stroke="#00FF00" stroke-width="2.6"/>
<line x1="663.3" y1="866" x2="689.7" y2="860" stroke="#00FF00" stroke-width="2.6"/>
<line x1="693" y1="858.4" x2="711.7" y2="845.8" stroke="#00FF00" stroke-width="2.6"/>
<line x1="811" y1="779" x2="828.8" y2="785.4" stroke="#FF0000" stroke-width="2.6"/>
<line x1="843.9" y1="784.4" x2="867.8" y2="806.5" stroke="#FF0000" stroke-width="2.6"/>
<line x1="1048.2" y1="773.6" x2="1065.5" y2="778.7" stroke="#FF0000" stroke-width="2.6"/>
<line x1="843.9" y1="810.2" x2="866.8" y2="817.3" stroke="#8B0000" stroke-width="2"/>
<line x1="472" y1="826" x2="486" y2="831" stroke="#8B0000" stroke-width="2"/>
<line x1="968" y1="840" x2="984" y2="840" stroke="#006400" stroke-width="2"/>
<text x="3" y="753" fill="#111" textLength="500" lengthAdjust="spacing">GZT_VelocityMomoDiv(ES 03-16 (4 Range),10,55,3,12,True,0,0,True,26,1,1,High_Low,20,True,False)</text>
<text x="2.5" y="930.6" fill="#111" textLength="124" lengthAdjust="spacing">© 2016 NinjaTrader, LLC</text>
<rect x="1120.4" y="739" width="96.4" height="191" fill="#191970"/>
<rect x="1124.9" y="810.9" width="88.3" height="19.3" fill="#00FF00"/><rect x="1124.9" y="856.8" width="88.3" height="18.4" fill="#00FF00"/>
<text x="1127" y="801.3" fill="#fff" font-weight="bold" font-size="8" textLength="41.4" lengthAdjust="spacing">MACD BB:</text><text x="1127" y="847.5" fill="#fff" font-weight="bold" font-size="8" textLength="51.4" lengthAdjust="spacing">HISTOGRAM:</text>
<text x="1138.4" y="825" fill="#000" font-weight="bold" font-size="10.7" textLength="59.5" lengthAdjust="spacing">Bullish Acc</text><text x="1138.4" y="870" fill="#000" font-weight="bold" font-size="10.7" textLength="59.5" lengthAdjust="spacing">Bullish Acc</text>
<path d="M1219 746.5H1225" stroke="#000" stroke-width="1"/>
<text x="1227" y="750.7" fill="#111">4</text>
<path d="M1219 768.5H1225" stroke="#000" stroke-width="1"/>
<text x="1227" y="773.5" fill="#111">3</text>
<path d="M1219 791.5H1225" stroke="#000" stroke-width="1"/>
<text x="1227" y="796.3" fill="#111">2</text>
<path d="M1219 814.5H1225" stroke="#000" stroke-width="1"/>
<text x="1227" y="819.1" fill="#111">1</text>
<path d="M1219 837.5H1225" stroke="#000" stroke-width="1"/>
<text x="1227" y="841.9" fill="#111">0</text>
<path d="M1219 860.5H1225" stroke="#000" stroke-width="1"/>
<text x="1227" y="864.7" fill="#111">-1</text>
<path d="M1219 882.5H1225" stroke="#000" stroke-width="1"/>
<text x="1227" y="887.5" fill="#111">-2</text>
<path d="M1219 905.5H1225" stroke="#000" stroke-width="1"/>
<text x="1227" y="910.3" fill="#111">-3</text>
<path d="M1219 928.5H1225" stroke="#000" stroke-width="1"/>
<text x="1227" y="933.1" fill="#111">-4</text>
<path d="M0 933H1220" stroke="#000" stroke-width="1.4"/>
<path d="M9.5 933V938.5" stroke="#000" stroke-width="1"/><text x="9.5" y="950" text-anchor="middle" fill="#111">16:28:00</text>
<path d="M63.5 933V938.5" stroke="#000" stroke-width="1"/><text x="63.5" y="950" text-anchor="middle" fill="#111">16:30:52</text>
<path d="M117.5 933V938.5" stroke="#000" stroke-width="1"/><text x="117.5" y="950" text-anchor="middle" fill="#111">16:37:22</text>
<path d="M171.5 933V938.5" stroke="#000" stroke-width="1"/><text x="171.5" y="950" text-anchor="middle" fill="#111">16:43:16</text>
<path d="M225.5 933V938.5" stroke="#000" stroke-width="1"/><text x="225.5" y="950" text-anchor="middle" fill="#111">16:52:18</text>
<path d="M279.5 933V938.5" stroke="#000" stroke-width="1"/><text x="279.5" y="950" text-anchor="middle" fill="#111">17:00:25</text>
<path d="M333.5 933V938.5" stroke="#000" stroke-width="1"/><text x="333.5" y="950" text-anchor="middle" fill="#111">17:03:36</text>
<path d="M387.5 933V938.5" stroke="#000" stroke-width="1"/><text x="387.5" y="950" text-anchor="middle" fill="#111">17:11:06</text>
<path d="M441.5 933V938.5" stroke="#000" stroke-width="1"/><text x="441.5" y="950" text-anchor="middle" fill="#111">17:18:35</text>
<path d="M495.5 933V938.5" stroke="#000" stroke-width="1"/><text x="495.5" y="950" text-anchor="middle" fill="#111">17:28:28</text>
<path d="M549.5 933V938.5" stroke="#000" stroke-width="1"/><text x="549.5" y="950" text-anchor="middle" fill="#111">17:43:21</text>
<path d="M603.5 933V938.5" stroke="#000" stroke-width="1"/><text x="603.5" y="950" text-anchor="middle" fill="#111">17:54:20</text>
<path d="M657.5 933V938.5" stroke="#000" stroke-width="1"/><text x="657.5" y="950" text-anchor="middle" fill="#111">18:01:52</text>
<path d="M711.5 933V938.5" stroke="#000" stroke-width="1"/><text x="711.5" y="950" text-anchor="middle" fill="#111">18:11:48</text>
<path d="M765.5 933V938.5" stroke="#000" stroke-width="1"/><text x="765.5" y="950" text-anchor="middle" fill="#111">18:25:17</text>
<path d="M819.5 933V938.5" stroke="#000" stroke-width="1"/><text x="819.5" y="950" text-anchor="middle" fill="#111">18:38:22</text>
<path d="M873.5 933V938.5" stroke="#000" stroke-width="1"/><text x="873.5" y="950" text-anchor="middle" fill="#111">18:55:59</text>
<path d="M927.5 933V938.5" stroke="#000" stroke-width="1"/><text x="927.5" y="950" text-anchor="middle" fill="#111">19:09:57</text>
<path d="M981.5 933V938.5" stroke="#000" stroke-width="1"/><text x="981.5" y="950" text-anchor="middle" fill="#111">19:25:30</text>
<path d="M1035.5 933V938.5" stroke="#000" stroke-width="1"/><text x="1035.5" y="950" text-anchor="middle" fill="#111">19:43:11</text>
<path d="M1089.5 933V938.5" stroke="#000" stroke-width="1"/><text x="1089.5" y="950" text-anchor="middle" fill="#111">20:02:35</text>
</svg><div class="abs" id="titlebar"></div>
<svg class="abs" style="left:3px;top:4px" width="15" height="15" viewBox="0 0 15 15"><rect x="0.7" y="0.6" width="13" height="13" fill="#fbfbff" stroke="#8c8cab" stroke-width="1"/><path d="M4.4 1V13M7.6 1V13M10.7 1V13M1 4.4H13M1 7.5H13M1 10.6H13" stroke="#d4d4ea" stroke-width="1"/><path d="M1 11.6L4.1 9.9L7.3 3.7L10 7.1L13 6.1" fill="none" stroke="#1f6fe0" stroke-width="1.5"/><path d="M1 5.2L4.1 3.2L7 6.4L12.6 1.3" fill="none" stroke="#2fb320" stroke-width="1.5"/></svg>
<div class="abs" id="titletext">ES 03-16 (4 Range)  04.01.2016</div>
<div class="abs" style="left:1101px;top:0;width:34px;height:19px;box-sizing:border-box;border:2px solid #0078D7;border-top-width:1px;background:#e5e5e5;text-align:center;font-size:11px;line-height:15px">L</div>
<svg class="abs" style="left:1150px;top:0" width="130" height="22" viewBox="0 0 130 22" fill="none" stroke="#777" stroke-width="1">
<path d="M9 10.5H19"/><path d="M54.5 7.5H61.5V14.5H54.5Z"/><path d="M56.5 7.5V5.5H63.5V12.5H61.5"/><path d="M100 5L110 15M110 5L100 15" stroke-width="1.1"/></svg>
<div class="abs" id="toolbar"></div>
<div class="abs tbt" style="left:20px;letter-spacing:-0.53px">ES 03-16</div>
<div class="abs tbt" style="left:83.6px;letter-spacing:-0.16px">4 Range</div>
<svg class="abs" style="left:0;top:22px" width="440" height="26" viewBox="0 22 440 26">
<g fill="#a6a6a6"><rect x="3.2" y="27" width="1.8" height="1.8"/><rect x="3.2" y="31.1" width="1.8" height="1.8"/><rect x="3.2" y="35.1" width="1.8" height="1.8"/><rect x="3.2" y="39.2" width="1.8" height="1.8"/></g>
<path d="M12.5 28V43M144.5 28V43M254.5 28V43M312.5 28V43" stroke="#b0b0b0" stroke-width="1"/>
<g fill="#000"><path d="M70 34.5h5.4l-2.7 3z"/><path d="M131.3 34.5h5.4l-2.7 3z"/><path d="M167.3 34h5.4l-2.7 3z"/><path d="M196.3 34h5.4l-2.7 3z"/><path d="M276.8 34h5.4l-2.7 3z"/></g>
<!-- candles icon -->
<g><path d="M152 27.5V42.5M157 27V42M162 27.5V42.5" stroke="#111" stroke-width="1.6"/>
<rect x="150.3" y="30" width="3.4" height="10.5" rx="1" fill="#5fd436" stroke="#2c7d12" stroke-width=".7"/>
<rect x="155.3" y="29" width="3.4" height="10.5" rx="1" fill="#5fd436" stroke="#2c7d12" stroke-width=".7"/>
<rect x="160.3" y="30" width="3.4" height="10.5" rx="1" fill="#e8423a" stroke="#8d1712" stroke-width=".7"/></g>
<!-- pencil -->
<g transform="translate(179.7,41.6) rotate(-48)"><rect x="3" y="-2" width="12" height="4" fill="#f5d312" stroke="#a48a0a" stroke-width=".7"/><polygon points="3,-2 -1,0 3,2" fill="#e9d6b0" stroke="#8a7550" stroke-width=".6"/><polygon points="-1,0 0.6,-0.8 0.6,0.8" fill="#444"/><rect x="15" y="-2" width="2.6" height="4" rx=".8" fill="#ef6c75" stroke="#b23b45" stroke-width=".6"/></g>
<!-- zoom in -->
<g><path d="M209.5 42L214.5 36.5" stroke="#555" stroke-width="2.2" stroke-linecap="round"/><circle cx="216.5" cy="34.5" r="4.2" fill="#9ec9ee" stroke="#8c98a5" stroke-width="1.5"/><circle cx="215.8" cy="33.8" r="1.8" fill="#d6ebfb"/><path d="M221.5 27V33M218.5 30H224.5" stroke="#12a32a" stroke-width="2"/></g>
<!-- zoom out (disabled) -->
<g opacity=".9"><path d="M232.5 42L237.5 36.5" stroke="#aaa" stroke-width="2.2" stroke-linecap="round"/><circle cx="239.5" cy="34.5" r="4.2" fill="#d4d4d4" stroke="#bcbcbc" stroke-width="1.5"/><path d="M241.5 30.5H247" stroke="#bdbdbd" stroke-width="1.8"/></g>
<!-- cursor -->
<path d="M260.3 29.3L269.7 31L267.6 33.8L273 40L271.5 41.7L265.6 35.8L263.2 38.2Z" fill="#fff" stroke="#222" stroke-width="1" stroke-linejoin="round"/>
<!-- zoom box -->
<g><rect x="290.2" y="27.4" width="13.3" height="15" rx="1" fill="#fdfdfd" stroke="#7d7d7d" stroke-width="1.2"/><path d="M289.6 42.3L292.6 39.6" stroke="#333" stroke-width="2.2" stroke-linecap="round"/><circle cx="296.2" cy="35.6" r="4" fill="#86bfee" stroke="#c4c4c4" stroke-width="1.6"/></g>
<!-- icon1: levels -->
<g><path d="M320 31.5H334M320 36H334M320 40H330" stroke="#c9c9c9" stroke-width="1"/><path d="M318.5 27.8h5l2 1.4l-2 1.4h-5z" fill="#48d82a" stroke="#25851a" stroke-width=".6"/><path d="M318.5 35.3h5l2 1.4l-2 1.4h-5z" fill="#ee3a34" stroke="#8d1712" stroke-width=".6"/><rect x="327.6" y="29.5" width="2.1" height="13.5" fill="#5fd436" stroke="#2c7d12" stroke-width=".7"/><rect x="330.9" y="37.3" width="1.8" height="5.7" fill="#e8423a" stroke="#8d1712" stroke-width=".7"/></g>
<!-- icon2: candles on grid -->
<g><rect x="341.5" y="27.5" width="15" height="15" fill="#f4f4f4" stroke="#7a7a7a"/><path d="M342 31.5H356M342 35.5H356M342 39.5H356" stroke="#cfcfcf"/><path d="M344.7 28V42M349 28V40M353.4 29V42" stroke="#111" stroke-width="1.2"/><rect x="343.3" y="32" width="2.8" height="8" rx=".8" fill="#5fd436" stroke="#2c7d12" stroke-width=".6"/><rect x="347.6" y="30" width="2.8" height="8" rx=".8" fill="#5fd436" stroke="#2c7d12" stroke-width=".6"/><rect x="352" y="32.5" width="2.8" height="8" rx=".8" fill="#e8423a" stroke="#8d1712" stroke-width=".6"/></g>
<!-- icon3: line chart -->
<g><rect x="364.5" y="27.5" width="15" height="15" fill="#e4e4e4" stroke="#7a7a7a"/><rect x="365" y="38" width="14" height="4" fill="#b9b9b9"/><path d="M366 33.5L368 30.5L369.5 32L372 29.5L374.5 30L377 33L378.5 33" fill="none" stroke="#2aa86a" stroke-width="1"/><path d="M366 37L368 35L369.5 36.5L372 34.5L374.5 35L377 37.5L378.5 37.5" fill="none" stroke="#e03030" stroke-width="1"/></g>
<!-- icon4: dollar page -->
<g><path d="M389.5 28.5H398L401.5 32V42.5H389.5Z" fill="#fff" stroke="#8a8a8a"/><path d="M398 28.5V32H401.5" fill="none" stroke="#8a8a8a"/><text x="395.3" y="39.6" font-family="'Liberation Sans',sans-serif" font-weight="bold" font-size="10.5" fill="#1d9b2e" text-anchor="middle">$</text></g>
<!-- icon5: table -->
<g><rect x="411.5" y="27.5" width="13" height="15.5" fill="#f4f7fb" stroke="#8d8d8d"/><rect x="413" y="29.3" width="10" height="2.3" fill="#7fb2ea" stroke="#4f8ed6" stroke-width=".6"/><rect x="413.2" y="33.2" width="2.3" height="8" fill="#c99bf7" stroke="#8a4fe0" stroke-width=".8"/><path d="M417 34.5H423M417 37H423M417 39.5H423" stroke="#cfd9e6" stroke-width="1.4"/></g>
</svg>
<div class="abs" id="dlg">
<div class="abs" id="dlgtitle">Indicators</div><div class="abs" id="dlgclose">x</div>
<div class="abs" style="left:0;top:417px;width:561px;height:65px;background:#f0f0f0"></div><div class="abs" id="dlgbody"></div><div class="abs" style="left:0;top:0;width:561px;height:1px;background:#9a9a9a"></div>
<div class="abs lb" style="left:2px;top:32px;width:270px;height:212px">
<div class="li" style="top:2px">DM</div>
<div class="li" style="top:15px">DMI</div>
<div class="li" style="top:28px">DMIndex</div>
<div class="li" style="top:41px">DonchianChannel</div>
<div class="li" style="top:54px">DoubleStochastics</div>
<div class="li" style="top:67px">EaseOfMovement</div>
<div class="li" style="top:80px">EMA</div>
<div class="li" style="top:93px">FisherTransform</div>
<div class="li" style="top:106px">FOSC</div>
<div class="li" style="top:119px">GZT_Fractal_Converter_RV2</div>
<div class="li" style="top:132px">GZT_GoldenFibs</div>
<div class="li" style="top:145px">GZT_GoldenFibs_Classic</div>
<div class="li" style="top:158px">GZT_SDVolumeZones</div>
<div class="abs" style="left:1px;top:170px;width:249px;height:13px;background:#3399FF"></div><div class="li" style="top:171px;color:#fff">GZT_VelocityMomoDiv</div>
<div class="li" style="top:184px">HeikenAshi</div>
<div class="li" style="top:197px">HMA</div>
<div class="abs" style="left:251px;top:0;width:15px;height:210px;background:#f0f0f0"></div>
<div class="abs" style="left:251px;top:85px;width:15px;height:18px;background:#cdcdcd"></div>
<svg class="abs" style="left:250px;top:1px" width="17" height="209" viewBox="0 0 17 209" fill="none" stroke="#505050" stroke-width="1.4"><path d="M5 11L8.5 7.5L12 11"/><path d="M5 198L8.5 201.5L12 198"/></svg>
</div>
<div class="abs lb" style="left:2px;top:248px;width:270px;height:121px"><div class="li" style="top:2px;left:3px;letter-spacing:-0.17px">GZT_VelocityMomoDiv(ES 03-16 (4 Range),10,55,3,12,</div></div>
<div class="btn" style="left:27px;top:385px;width:66px">New</div>
<div class="btn" style="left:179px;top:385px;width:66px;background:#cccccc;border-color:#bfbfbf;color:#a0a0a0;text-shadow:1px 1px 0 #fff">Remove</div>
<div class="btn" style="left:89px;top:446px;width:79px;border:2px solid #0078D7;line-height:18px;text-indent:2px">OK</div>
<div class="btn" style="left:241px;top:446px;width:78px">Apply</div>
<div class="btn" style="left:394px;top:446px;width:78px">Close</div>
<div class="abs" style="left:280px;top:32px;width:279px;height:321px;padding-top:1px;background:#c8c8c8;border:1px solid #a0a0a0;box-sizing:border-box;overflow:hidden">
<div class="pgrow" style="top:1px"><div class="pgl">Lookback slow EMA</div><div class="pgv" style="letter-spacing:0.75px">26</div></div>
<div class="pgrow" style="top:17px"><div class="pgl">Period Bollinger Band</div><div class="pgv" style="letter-spacing:0.75px">10</div></div>
<div class="pgrow" style="top:33px"><div class="pgl">Std. dev. multiplier</div><div class="pgv" style="letter-spacing:0.75px">1</div></div>
<div class="pgrow" style="top:49px"><div class="pgx"></div><div class="pgc" style="letter-spacing:0.15px">SwingTrend Parameters</div></div>
<div class="pgrow" style="top:65px"><div class="pgl">Deviation multiplier</div><div class="pgv" style="letter-spacing:0.75px">0</div></div>
<div class="pgrow" style="top:81px"><div class="pgl">Sensitivity double tops</div><div class="pgv" style="letter-spacing:0.75px">0</div></div>
<div class="pgrow" style="top:97px"><div class="pgl">Swing strength</div><div class="pgv" style="letter-spacing:0.75px">1</div></div>
<div class="pgrow" style="top:113px"><div class="pgx"></div><div class="pgc" style="letter-spacing:0.45px">Data</div></div>
<div class="pgrow" style="top:129px"><div class="pgl">Calculate on bar close</div><div class="pgv" style="letter-spacing:0.5px">True</div></div>
<div class="pgrow" style="top:145px"><div class="pgl">Input series</div><div class="pgv" style="letter-spacing:0.74px">ES 03-16 (4 Range)</div></div>
<div class="pgrow" style="top:161px"><div class="pgl">Maximum bars look back</div><div class="pgv" style="letter-spacing:0.3px">Infinite</div></div>
<div class="pgrow" style="top:177px"><div class="pgx"></div><div class="pgc" style="letter-spacing:0.23px">Visual</div></div>
<div class="pgrow" style="top:193px"><div class="pgl">Auto scale</div><div class="pgv" style="letter-spacing:0.5px">True</div></div>
<div class="pgrow" style="top:209px"><div class="pgl">Displacement</div><div class="pgv" style="letter-spacing:0.75px">0</div></div>
<div class="pgrow" style="top:225px"><div class="pgl">Display in Data Box</div><div class="pgv" style="letter-spacing:0.5px">True</div></div>
<div class="pgrow" style="top:241px"><div class="pgl" style="background:#c8c8c8">Label</div><div class="pgv" style="letter-spacing:0.6px">GZT_VelocityMomoDiv</div></div>
<div class="pgrow" style="top:257px"><div class="pgl">Panel</div><div class="pgv" style="letter-spacing:0.75px">1</div></div>
<div class="pgrow" style="top:273px"><div class="pgl">Price marker(s)</div><div class="pgv" style="letter-spacing:0.17px">False</div></div>
<div class="pgrow" style="top:289px"><div class="pgl">Scale justification</div><div class="pgv" style="letter-spacing:0.07px">Right</div></div>
<div class="pgrow" style="top:305px"><div class="pgx"></div><div class="pgc" style="letter-spacing:-0.04px">Display Options Divergences</div></div>
<div class="abs" style="left:260px;top:0;width:17px;height:320px;background:#f0f0f0"></div>
<svg class="abs" style="left:259.5px;top:0" width="17" height="320" viewBox="0 0 17 320" fill="none" stroke="#bfbfbf" stroke-width="1.4"><path d="M5 10L8.5 6.5L12 10"/><path d="M5 309L8.5 312.5L12 309"/></svg>
</div>
<div class="abs" style="left:280px;top:356px;width:279px;height:59px;background:#f0f0f0;border:1px solid #a0a0a0;box-sizing:border-box">
<div class="abs" style="left:4px;top:3px;font-weight:bold;font-size:11px;letter-spacing:0.44px">Label</div>
<div class="abs" style="left:4px;top:17px;line-height:13px;white-space:pre;font-size:11px;letter-spacing:-0.03px">The GZTVelocityMomoDiv Measures 2 components</div><div class="abs" style="left:4px;top:30px;line-height:13px;white-space:pre;font-size:11px;letter-spacing:0.08px">of momentum:  1) the velocity histogram measures...</div>
</div>
<svg class="abs" style="left:549px;top:470px" width="12" height="12" viewBox="0 0 12 12" fill="#bdbdbd"><rect x="8.2" y="8.3" width="1.7" height="1.6"/><rect x="5.3" y="8.3" width="1.6" height="1.6"/><rect x="2.3" y="8.3" width="1.6" height="1.6"/><rect x="8.2" y="5.2" width="1.7" height="1.6"/><rect x="5.3" y="5.2" width="1.6" height="1.6"/><rect x="8.2" y="2.2" width="1.7" height="1.6"/></svg>
</div>
<div class="abs" style="left:0;top:960px;width:1280px;height:24px;background:#f0f0f0"></div>
<div class="abs" style="left:1173px;top:961px;width:90px;height:22px;background:#cdcdcd"></div>
<svg class="abs" style="left:0;top:960px" width="1280" height="24" viewBox="0 0 1280 24" fill="none" stroke="#505050" stroke-width="1.6"><path d="M10 8L6 12L10 16"/><path d="M1269 8L1273 12L1269 16"/></svg></body></html>
